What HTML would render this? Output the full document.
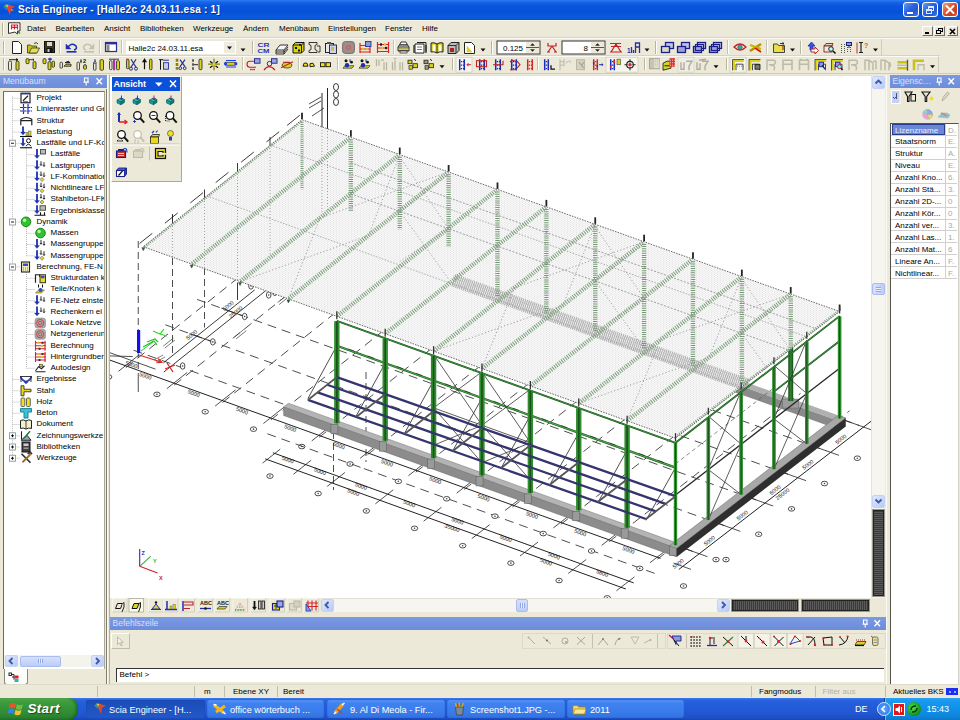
<!DOCTYPE html>
<html lang="de"><head><meta charset="utf-8"><title>Scia Engineer - [Halle2c 24.03.11.esa : 1]</title>
<style>

html,body{margin:0;padding:0;background:#ece9d8;}
body{width:960px;height:720px;overflow:hidden;font-family:"Liberation Sans",sans-serif;font-size:8px;color:#000;}
#screen{position:relative;width:960px;height:720px;overflow:hidden;background:#ece9d8;}
.abs{position:absolute;}
.t{position:absolute;white-space:nowrap;line-height:10px;height:10px;}
#titlebar{left:0;top:0;width:960px;height:20px;background:linear-gradient(#2f7df0 0px,#1867e8 2px,#0a58de 5px,#0650d6 12px,#0a5be2 17px,#0c56d0 19px,#0a4cc0 20px);}
#titletext{left:18px;top:3px;color:#fff;font-weight:bold;font-size:10px;line-height:14px;height:14px;letter-spacing:0.243px;text-shadow:1px 1px 0 #0a2f8a;}
.capbtn{position:absolute;top:2px;width:16px;height:15px;border:1px solid #fff;border-radius:3px;background:linear-gradient(135deg,#6a9cf5,#2a62dd 45%,#2458d2 70%,#3f78ec);box-sizing:border-box;}
#menubar{left:0;top:20px;width:960px;height:18px;background:#ece9d8;border-top:1px solid #f8f6ee;box-sizing:border-box;}
.menu{top:24px;font-size:8px;}
.tbrow{position:absolute;left:0;width:960px;}
.grip{position:absolute;width:1px;background:#b5b29f;border-right:1px solid #fff;}
.sep{position:absolute;width:1px;background:#c5c2b2;border-right:1px solid #fff;}
.hdr{position:absolute;height:13px;background:linear-gradient(#7b9ae4,#6d8cd9);color:#d7e0f7;font-size:8.5px;line-height:13px;white-space:nowrap;overflow:hidden;}
.sunken{position:absolute;border:1px solid #8c8a7c;border-right-color:#fff;border-bottom-color:#fff;box-sizing:border-box;background:#fff;}
</style></head>
<body>
<div id="screen">
<div id="titlebar" class="abs"></div>
<svg class="abs" style="left:2px;top:3px" width="14" height="14" viewBox="0 0 14 14"><path d="M1 3 L5 2 L6 6 Z" fill="#35b04a"/><path d="M3 1.5 L8 2 L7 6 Z" fill="#f4c430"/><path d="M6 2 L13 3.5 L9 6 L8 12 L5.5 7 Z" fill="#e5452b"/><path d="M9 6 L12 7 L9 8.2 Z" fill="#f08a2a"/><path d="M1 3 L4 7 L6 6 Z" fill="#3a78d8"/></svg>
<div id="titletext" class="t">Scia Engineer - [Halle2c 24.03.11.esa : 1]</div>
<div class="capbtn" style="left:903px"><div class="abs" style="left:3px;top:9px;width:6px;height:2px;background:#fff"></div></div>
<div class="capbtn" style="left:922px"><div class="abs" style="left:5px;top:3px;width:6px;height:5px;border:1px solid #dfe9ff;border-top-width:2px;box-sizing:border-box"></div><div class="abs" style="left:3px;top:6px;width:6px;height:5px;border:1px solid #dfe9ff;border-top-width:2px;box-sizing:border-box;background:#2c63dc"></div></div>
<div class="capbtn" style="left:942px;background:linear-gradient(135deg,#f0a080,#d9532c 45%,#c8401c 75%,#e0603a)"><svg class="abs" style="left:0;top:0" width="14" height="13" viewBox="0 0 14 13"><path d="M3.5 3 L10.5 10 M10.5 3 L3.5 10" stroke="#fff" stroke-width="2" stroke-linecap="round"/></svg></div>
<div id="menubar" class="abs"></div>
<div class="grip" style="left:2px;top:23px;height:13px"></div>
<svg class="abs" style="left:7px;top:22px" width="15" height="14" viewBox="0 0 15 14"><path d="M1.5 0.8 H13 V9 L10.5 9 L10.5 12 L8 10 L1.5 11.5 Z" fill="#fff" stroke="#333" stroke-width="1"/><path d="M4 3 H11 M4 5.3 H11 M4.5 2.5 V7.5 M7.5 2.5 V7.5 M10.5 2.5 V7.5" stroke="#d8232a" stroke-width="1.2" fill="none"/><path d="M11 9.5 l2 2" stroke="#2a8a3a" stroke-width="1.2"/></svg>
<div class="t menu" style="left:27px">Datei</div>
<div class="t menu" style="left:55.5px">Bearbeiten</div>
<div class="t menu" style="left:104px">Ansicht</div>
<div class="t menu" style="left:140px">Bibliotheken</div>
<div class="t menu" style="left:193px">Werkzeuge</div>
<div class="t menu" style="left:243px">Ändern</div>
<div class="t menu" style="left:279px">Menübaum</div>
<div class="t menu" style="left:328px">Einstellungen</div>
<div class="t menu" style="left:385px">Fenster</div>
<div class="t menu" style="left:422px">Hilfe</div>
<div class="abs" style="left:922px;top:26px;width:11px;height:10px;background:#ece9d8;border:1px solid #fff;border-right-color:#716f64;border-bottom-color:#716f64;box-sizing:border-box"></div>
<div class="abs" style="left:934px;top:26px;width:11px;height:10px;background:#ece9d8;border:1px solid #fff;border-right-color:#716f64;border-bottom-color:#716f64;box-sizing:border-box"></div>
<div class="abs" style="left:947px;top:26px;width:11px;height:10px;background:#ece9d8;border:1px solid #fff;border-right-color:#716f64;border-bottom-color:#716f64;box-sizing:border-box"></div>
<div class="abs" style="left:925px;top:32px;width:4px;height:2px;background:#000"></div>
<div class="abs" style="left:938px;top:28px;width:5px;height:4px;border:1px solid #000;border-top-width:1.5px;box-sizing:border-box"></div>
<div class="abs" style="left:936px;top:30px;width:5px;height:4px;border:1px solid #000;border-top-width:1.5px;box-sizing:border-box;background:#ece9d8"></div>
<svg class="abs" style="left:949px;top:28px" width="7" height="7" viewBox="0 0 7 7"><path d="M1 1 L6 6 M6 1 L1 6" stroke="#000" stroke-width="1.6"/></svg>
<div class="abs" style="left:0;top:37px;width:960px;height:1px;background:#d8d4c2"></div>
<div class="abs" style="left:0;top:38px;width:960px;height:1px;background:#fbfaf4"></div>
<div class="abs" style="left:0;top:55px;width:940px;height:1px;background:#d8d4c2"></div>
<div class="abs" style="left:0;top:56px;width:940px;height:1px;background:#fbfaf4"></div>
<div class="abs" style="left:0;top:73px;width:960px;height:1px;background:#cfccba"></div>
<svg class="abs" style="left:0;top:0" width="960" height="76" viewBox="0 0 960 76" shape-rendering="auto">
<rect x="3" y="41" width="1" height="13" fill="#b8b5a2"/><rect x="4" y="41" width="1" height="13" fill="#fff"/>
<path d="M12.5 41.5 h6 l3 3 v9 h-9 z" stroke="#222" stroke-width="1" fill="#fff"/>
<path d="M27.5 45 h3 l1 1 h5 v7 h-9 z" stroke="#333" stroke-width="0.8" fill="#c9c21a"/><path d="M29 53 l2.5 -5 h8 l-2.5 5 z" stroke="#333" stroke-width="0.8" fill="#e6e04a"/><path d="M34 43.5 q2.5 -2 4 0.5" stroke="#222" stroke-width="0.9" fill="none"/>
<rect x="44.5" y="41.5" width="10" height="11" fill="#3a3a1a" stroke="#111" stroke-width="1"/><rect x="47" y="42" width="5" height="4" fill="#d8d8d8"/><rect x="46.5" y="48" width="6" height="4.5" fill="#111"/><rect x="47.5" y="49" width="2" height="3" fill="#ccc"/>
<rect x="59" y="40" width="1" height="14" fill="#c5c2b2"/><rect x="60" y="40" width="1" height="14" fill="#fff"/>
<path d="M68 47 q4 -5 8 -1 q1.5 3 -2 4" stroke="#1c2fb4" stroke-width="1.6" fill="none"/><path d="M66 44 v5 h5 z" stroke="#1c2fb4" stroke-width="0.5" fill="#1c2fb4"/><rect x="66.5" y="51" width="10" height="1.6" fill="#1c2fb4"/>
<path d="M92 47 q-4 -5 -8 -1 q-1.5 3 2 4" stroke="#c4c1b0" stroke-width="1.6" fill="none"/><path d="M94 44 v5 h-5 z" stroke="#c4c1b0" stroke-width="0.5" fill="#c4c1b0"/><rect x="84" y="51" width="10" height="1.6" fill="#c4c1b0"/>
<rect x="99" y="40" width="1" height="14" fill="#c5c2b2"/><rect x="100" y="40" width="1" height="14" fill="#fff"/>
<rect x="105.5" y="42.5" width="11" height="9" fill="#fff" stroke="#2a2f9a" stroke-width="1.2"/><rect x="105" y="42" width="12" height="2.4" fill="#2a2f9a"/><rect x="106.5" y="45" width="3" height="6" fill="#8a8a8a"/>
<rect x="121" y="40" width="1" height="14" fill="#c5c2b2"/><rect x="122" y="40" width="1" height="14" fill="#fff"/>
<rect x="126" y="41" width="110" height="13" fill="#fff"/>
<text x="128.5" y="50.6" font-family="Liberation Sans, sans-serif" font-size="8" fill="#000">Halle2c 24.03.11.esa</text>
<rect x="224" y="42" width="11" height="11" fill="#eeece0"/>
<path d="M227 46.5 h5 l-2.5 3 z" fill="#111"/>
<path d="M240.5 48.5 h5 l-2.5 3 z" fill="#111"/>
<rect x="252" y="41" width="1" height="13" fill="#b8b5a2"/><rect x="253" y="41" width="1" height="13" fill="#fff"/>
<text x="257.5" y="47" font-family="Liberation Sans, sans-serif" font-size="6" font-weight="bold" fill="#1c2fb4" textLength="12" lengthAdjust="spacingAndGlyphs">CR</text>
<text x="257.5" y="53" font-family="Liberation Sans, sans-serif" font-size="6" font-weight="bold" fill="#1c2fb4" textLength="12" lengthAdjust="spacingAndGlyphs">CM</text>
<path d="M276 50 l4 -5 h8 l-4 5 z" stroke="#222" stroke-width="0.9" fill="#f4f4f4"/><path d="M276 52 h8 l4 -5 M276 54 h8 l4 -5 M276 50 v4 M284 50 v4" stroke="#222" stroke-width="0.9" fill="none"/>
<path d="M293 45 l2.5 -2.5 h8.5 v8 l-2.5 2.5 h-8.5 z" stroke="#111" stroke-width="1" fill="#d9d21c"/><path d="M293 45 h8.5 v8 M301.5 45 l2.5 -2.5" stroke="#111" stroke-width="0.9" fill="none"/><rect x="295" y="47" width="2" height="2" fill="#111"/><rect x="298" y="49.5" width="2" height="2" fill="#111"/><rect x="299" y="44" width="2" height="1.5" fill="#111"/>
<path d="M309 42.5 h8 v2 l-2 1 v4 l2 1 v2 h-8 v-2 l2 -1 v-4 l-2 -1 z" stroke="#222" stroke-width="0.9" fill="#ece9d8"/><path d="M317 46 h3 v6 h-2" stroke="#222" stroke-width="0.9" fill="none"/>
<rect x="325.5" y="43.5" width="8" height="9" fill="#e8e8e8" stroke="#223" stroke-width="1"/><rect x="329.5" y="45" width="7" height="8.5" fill="#c9d4f0" stroke="#223" stroke-width="0.9"/><rect x="331" y="47" width="3" height="3.5" fill="#e8b030"/><rect x="327" y="42" width="4" height="2" fill="#555"/>
<rect x="342.5" y="41.5" width="12" height="12" fill="#8f8f8f" stroke="#666" stroke-width="0.8" rx="3"/><circle cx="348.5" cy="47.5" r="4" fill="none" stroke="#d77" stroke-width="1"/><circle cx="348.5" cy="47.5" r="2" fill="none" stroke="#c55" stroke-width="1"/>
<path d="M360 43 v10 M370 46 v7 M360 45.5 h10 M360 49 h10 M360 52 h10" stroke="#d8232a" stroke-width="1.2" fill="none"/><rect x="365.5" y="41.5" width="5.5" height="5" fill="#8a9ae0" stroke="#2a2f9a" stroke-width="0.9"/><rect x="362" y="47.8" width="2" height="2.2" fill="#e0c020"/><rect x="366" y="47.8" width="2" height="2.2" fill="#e0c020"/>
<path d="M377.5 42 v11 M388.5 42 v11 M377 44.5 h12 M377 48 h12 M377 51.5 h12" stroke="#d8232a" stroke-width="1.2" fill="none"/><rect x="380" y="43.3" width="2" height="2.4" fill="#222"/><rect x="384" y="43.3" width="2" height="2.4" fill="#e0c020"/><rect x="381" y="46.8" width="2" height="2.4" fill="#e0c020"/><rect x="385" y="46.8" width="2" height="2.4" fill="#222"/>
<rect x="393" y="40" width="1" height="14" fill="#c5c2b2"/><rect x="394" y="40" width="1" height="14" fill="#fff"/>
<path d="M398 47 l2 -3 h7 l2 3 v4 h-11 z" stroke="#222" stroke-width="0.9" fill="#888"/><path d="M400 44 l1 -2 h5 l1 2" stroke="#222" stroke-width="0.9" fill="#fff"/><rect x="398.5" y="48.5" width="10" height="1.5" fill="#d9d21c"/><rect x="400" y="51" width="7" height="2" fill="#eee" stroke="#222" stroke-width="0.7"/>
<path d="M415 44 h9 v9 h-9 z" stroke="#222" stroke-width="1" fill="#fff"/><path d="M417 42.5 h9 v9" stroke="#222" stroke-width="1" fill="none"/><path d="M417 47 h5 M417 49.5 h5" stroke="#555" stroke-width="0.8" fill="none"/><path d="M414 45 v8 M426 45 v8" stroke="#222" stroke-width="1.2" fill="none"/>
<path d="M431 43 q3 -1 6 1 q3 -2 6 -1 v9 q-3 -1 -6 1 q-3 -2 -6 -1 z" stroke="#222" stroke-width="1" fill="#d9d21c"/><path d="M437 44 v9" stroke="#222" stroke-width="0.9" fill="none"/><path d="M433 45 h2 v6 h-2 z M439 45 h2 v6 h-2 z" stroke="#fff" stroke-width="0.5" fill="#fffbe0"/>
<path d="M448 45.5 l3 -3 h8 v8 l-3 3 h-8 z" stroke="#222" stroke-width="1" fill="#bbb"/><path d="M448 45.5 h8 v8 M456 45.5 l3 -3" stroke="#222" stroke-width="0.9" fill="none"/><rect x="450" y="48" width="4" height="4" fill="#a22"/>
<path d="M464.5 42.5 h7 l3 3 v8 h-10 z" stroke="#222" stroke-width="1" fill="#fff"/><path d="M467 46 l5 6 h-5 z" stroke="#d9d21c" stroke-width="0.5" fill="#d9d21c"/>
<path d="M480.5 48.5 h5 l-2.5 3 z" fill="#111"/>
<rect x="491" y="41" width="1" height="13" fill="#b8b5a2"/><rect x="492" y="41" width="1" height="13" fill="#fff"/>
<rect x="497" y="41" width="43" height="13" fill="#fff" stroke="#333" stroke-width="1"/>
<text x="503" y="51" font-family="Liberation Sans, sans-serif" font-size="8" fill="#000">0.125</text>
<rect x="526" y="42" width="13" height="11" fill="#ece9d8"/><path d="M526 47.5 h13" stroke="#555" stroke-width="1" fill="none"/><path d="M530.5 45.5 l2 -2 l2 2 z M530.5 49.5 l2 2 l2 -2 z" stroke="#111" stroke-width="0.3" fill="#111"/>
<path d="M548 43 v3 h8 v-3 M552 46 l-4 6 M552 46 l4 6 M547 52 h3 M554 52 h3" stroke="#c0202a" stroke-width="1.2" fill="none"/>
<rect x="562" y="41" width="43" height="13" fill="#fff" stroke="#333" stroke-width="1"/>
<text x="583.5" y="51" font-family="Liberation Sans, sans-serif" font-size="8" fill="#000">8</text>
<rect x="591" y="42" width="13" height="11" fill="#ece9d8"/><path d="M591 47.5 h13" stroke="#555" stroke-width="1" fill="none"/><path d="M595.5 45.5 l2 -2 l2 2 z M595.5 49.5 l2 2 l2 -2 z" stroke="#111" stroke-width="0.3" fill="#111"/>
<path d="M610 43.5 h11 M611 46.5 h10 M616 44 l-5 8 M616 44 l5 8 M610 52 h12" stroke="#c0202a" stroke-width="1.2" fill="none"/>
<text x="627" y="53" font-family="Liberation Sans, sans-serif" font-size="6.5" font-weight="bold" fill="#1c2fb4">1</text>
<path d="M631.5 53 v-6 M635.5 53 v-10 h4 v4 h-4 M639.5 47 v6 M633.5 53 v-3" stroke="#2a2f9a" stroke-width="1.3" fill="none"/>
<path d="M644.5 48.5 h5 l-2.5 3 z" fill="#111"/>
<rect x="655" y="41" width="1" height="13" fill="#b8b5a2"/><rect x="656" y="41" width="1" height="13" fill="#fff"/>
<rect x="665.5" y="42.5" width="8" height="6" fill="#bfc4e6" stroke="#1a1f8a" stroke-width="1.3"/><rect x="661.5" y="46.5" width="8" height="6" fill="#d8d8c8" stroke="#1a1f8a" stroke-width="1.3"/>
<rect x="681.5" y="42.5" width="8" height="6" fill="#bfc4e6" stroke="#1a1f8a" stroke-width="1.3"/><rect x="677.5" y="46.5" width="8" height="6" fill="#9aa0d8" stroke="#1a1f8a" stroke-width="1.3"/>
<rect x="697.5" y="42.5" width="8" height="6" fill="#bfc4e6" stroke="#1a1f8a" stroke-width="1.3"/><rect x="693.5" y="46.5" width="8" height="6" fill="#9aa0d8" stroke="#1a1f8a" stroke-width="1.3"/><rect x="695.5" y="44.5" width="8" height="6" fill="none" stroke="#1a1f8a" stroke-width="1.1"/>
<rect x="713.5" y="42.5" width="8" height="6" fill="#bfc4e6" stroke="#1a1f8a" stroke-width="1.3"/><rect x="709.5" y="46.5" width="8" height="6" fill="#9aa0d8" stroke="#1a1f8a" stroke-width="1.3"/><rect x="711.5" y="44.5" width="8" height="6" fill="none" stroke="#1a1f8a" stroke-width="1.1"/>
<rect x="727" y="40" width="1" height="14" fill="#c5c2b2"/><rect x="728" y="40" width="1" height="14" fill="#fff"/>
<path d="M734 47 q6 -6 12 0 q-6 6 -12 0 z" stroke="#c0202a" stroke-width="1.3" fill="#ece9d8"/><circle cx="740" cy="47.3" r="2.3" fill="#3aa0a0" stroke="#555" stroke-width="0.6"/>
<path d="M750 51 l11 -7" stroke="#b89000" stroke-width="2.6" fill="none"/><path d="M750 45 l11 4" stroke="#c8b400" stroke-width="2.2" fill="none"/><path d="M755 48 l6 4" stroke="#e01010" stroke-width="1.6" fill="none"/>
<rect x="766" y="40" width="1" height="14" fill="#c5c2b2"/><rect x="767" y="40" width="1" height="14" fill="#fff"/>
<path d="M773.5 44 h4 l1 1.5 h6 v7 h-11 z" stroke="#333" stroke-width="0.9" fill="#e8e04a"/><path d="M780 43.5 h4 M784 43.5 l-1.5 -1.2 M784 43.5 l-1.5 1.2" stroke="#222" stroke-width="0.9" fill="none"/><path d="M783 46 v4" stroke="#c0202a" stroke-width="1.2" fill="none"/>
<path d="M790 48.5 h5 l-2.5 3 z" fill="#111"/>
<rect x="800" y="41" width="1" height="13" fill="#b8b5a2"/><rect x="801" y="41" width="1" height="13" fill="#fff"/>
<path d="M808 46 l3.5 -4 l3.5 4 h-2 v4 h-3 v-4 z" stroke="#1c2fb4" stroke-width="0.8" fill="#3a50e0"/><path d="M811 49 h4 v-2 l3.5 3.5 l-3.5 3.5 v-2 h-4 z" stroke="#c0202a" stroke-width="1" fill="#fff"/>
<path d="M824 46 l2 -2.5 h7 l-1 2.5 z" stroke="#7a2a1a" stroke-width="0.9" fill="#e8d0c0"/><rect x="824" y="46" width="8" height="6" fill="#f4e8e0" stroke="#7a2a1a" stroke-width="0.9"/><circle cx="831" cy="49" r="2.3" fill="#bfe" stroke="#223" stroke-width="1"/><path d="M833 51 l2.5 2.5" stroke="#111" stroke-width="1.6" fill="none"/>
<path d="M841.5 44 v9 M844.5 44 v9 M847.5 47 v6 M850.5 47 v6" stroke="#555" stroke-width="1" fill="none" stroke-dasharray="1 1"/><rect x="846.5" y="42.5" width="5" height="3" fill="#8a9ae0" stroke="#1a1f8a" stroke-width="1"/><path d="M849 46 v2" stroke="#1a1f8a" stroke-width="1" fill="none"/>
<path d="M857 42.5 v11" stroke="#c05050" stroke-width="1.2" fill="none"/><path d="M859 42.5 h4 M861 42.5 v10 M859 52.5 h4" stroke="#222" stroke-width="1.2" fill="none"/>
<text x="864" y="48" font-family="Liberation Sans, sans-serif" font-size="7" font-weight="bold" fill="#c86a10">?</text>
<path d="M873 48.5 h5 l-2.5 3 z" fill="#111"/>
<rect x="881" y="39" width="1" height="16" fill="#d0cdbc"/>
<g transform="translate(0 -0.8)">
<rect x="3" y="59" width="1" height="12" fill="#b8b5a2"/><rect x="4" y="59" width="1" height="12" fill="#fff"/>
<rect x="8.5" y="62" width="3" height="9" fill="#ece9d8" stroke="#222" stroke-width="0.8" rx="1"/><rect x="16" y="62" width="3" height="9" fill="#d9d21c" stroke="#222" stroke-width="0.8" rx="1"/><path d="M9 60.5 h9 M18 60.5 l-1.5 -1 v2 z" stroke="#111" stroke-width="0.9" fill="none"/>
<rect x="26" y="59.5" width="3" height="5" fill="#d9d21c" stroke="#222" stroke-width="0.8" rx="1"/><rect x="33" y="62.5" width="3" height="7" fill="#d9d21c" stroke="#222" stroke-width="0.8" rx="1"/><path d="M29 60.5 h5 l-1.2 -1 M34 60.5 l-1.2 1" stroke="#111" stroke-width="0.8" fill="none"/>
<rect x="43" y="59.5" width="3" height="5" fill="#d9d21c" stroke="#222" stroke-width="0.8" rx="1"/><rect x="48" y="62.5" width="3" height="8" fill="#d9d21c" stroke="#222" stroke-width="0.8" rx="1"/><rect x="52" y="62" width="2.5" height="6" fill="#d9d21c" stroke="#222" stroke-width="0.8" rx="1"/><path d="M48 60 h4 M50 58.5 v3.5" stroke="#1c2fb4" stroke-width="1.2" fill="none"/>
<rect x="60" y="63" width="2.5" height="6" fill="#ece9d8" stroke="#222" stroke-width="0.8" rx="1"/><path d="M64 67 h7 v-2 h-5 z" stroke="#111" stroke-width="0.8" fill="#d9d21c"/><path d="M65 63.5 h5 l-1.5 -1.5 z" stroke="#111" stroke-width="0.8" fill="#111"/>
<rect x="77" y="63" width="2.5" height="8" fill="#ece9d8" stroke="#222" stroke-width="0.8" rx="1"/><rect x="83.5" y="66" width="3" height="4" fill="#d9d21c" stroke="#222" stroke-width="0.8" rx="1"/><path d="M81 60 v4 M80 62 h2" stroke="#111" stroke-width="0.8" fill="none"/><text x="83" y="64" font-family="Liberation Sans, sans-serif" font-size="5.5" font-weight="bold" fill="#111">2</text><circle cx="85" cy="66" r="0.9" fill="#fff" stroke="#111" stroke-width="0.6"/>
<rect x="93.5" y="63" width="2.5" height="8" fill="#ece9d8" stroke="#222" stroke-width="0.8" rx="1"/><rect x="100" y="60.5" width="3.5" height="10.5" fill="#d9d21c" stroke="#222" stroke-width="0.8" rx="1"/><path d="M95 60 v3" stroke="#1c2fb4" stroke-width="1.2" fill="none"/><circle cx="95" cy="63.5" r="1" fill="#fff" stroke="#111" stroke-width="0.6"/>
<rect x="109.5" y="61.5" width="2.5" height="9" fill="#ece9d8" stroke="#222" stroke-width="0.8" rx="1"/><rect x="116.5" y="61.5" width="3" height="9" fill="#d9d21c" stroke="#222" stroke-width="0.8" rx="1"/><rect x="113" y="60.5" width="2.2" height="10.5" fill="#b030b0"/><path d="M109 60 h10" stroke="#111" stroke-width="0.8" fill="none"/>
<rect x="126.5" y="60.5" width="2.5" height="9" fill="#d9d21c" stroke="#222" stroke-width="0.8" rx="1"/><path d="M131 60 l5 8 M136 60 l-5 8" stroke="#2a2f8a" stroke-width="1.2" fill="none"/><circle cx="131" cy="69.5" r="1.5" fill="none" stroke="#2a2f8a" stroke-width="1"/><circle cx="136" cy="69.5" r="1.5" fill="none" stroke="#2a2f8a" stroke-width="1"/><path d="M126 60 h3" stroke="#c0202a" stroke-width="1" fill="none"/>
<path d="M144.5 63 v7 M144.5 60 l-1.5 2.5 h3 z" stroke="#111" stroke-width="1.2" fill="#111"/><rect x="149.5" y="60" width="2.5" height="10.5" fill="#d9d21c" stroke="#222" stroke-width="0.8" rx="1"/>
<path d="M160.5 60.5 v10 M159 60.5 h4" stroke="#111" stroke-width="1" fill="none"/><rect x="163.5" y="63.5" width="5" height="6.5" fill="#c8cce8" stroke="#2a2f8a" stroke-width="0.9"/><path d="M163 61 h6" stroke="#2a2f8a" stroke-width="1" fill="none"/>
<path d="M177 59.5 v11" stroke="#8a8400" stroke-width="2.6" fill="none" stroke-dasharray="3 1.2"/><path d="M180 60.5 l5 7 M185 60.5 l-5 7" stroke="#2a2f8a" stroke-width="1.2" fill="none"/><circle cx="180.3" cy="69" r="1.4" fill="none" stroke="#2a2f8a" stroke-width="1"/><circle cx="184.7" cy="69" r="1.4" fill="none" stroke="#2a2f8a" stroke-width="1"/>
<path d="M193 60 v11" stroke="#111" stroke-width="1.3" fill="none" stroke-dasharray="2.5 1.5"/><rect x="199" y="60" width="3" height="10.5" fill="#d9d21c" stroke="#222" stroke-width="0.8" rx="1"/><path d="M194 65.5 h4" stroke="#111" stroke-width="0.9" fill="none"/>
<path d="M208 65 h12 M214 59.5 v11.5" stroke="#8a8400" stroke-width="1.3" fill="none"/><path d="M210 62 l2.5 2 M218 62 l-2.5 2 M210 68.5 l2.5 -2 M218 68.5 l-2.5 -2" stroke="#111" stroke-width="1.3" fill="none"/><circle cx="214" cy="65" r="1.4" fill="#d9d21c"/>
<rect x="225.5" y="63" width="10" height="3" fill="#d9d21c" stroke="#111" stroke-width="0.6"/><circle cx="225.5" cy="64.5" r="1.6" fill="#1c3ff0"/><circle cx="235.8" cy="64.5" r="1.6" fill="#1c3ff0"/><path d="M226 61.3 h10 M226 67.8 h10" stroke="#1c3ff0" stroke-width="1.1" fill="none"/>
<rect x="242" y="58" width="1" height="13" fill="#c5c2b2"/><rect x="243" y="58" width="1" height="13" fill="#fff"/>
<rect x="254.5" y="59.5" width="5.5" height="4.5" fill="#9aa6e8" stroke="#2a2f8a" stroke-width="1"/><path d="M254 62 h-4 q-3 0 -3 3 q0 3 3 3 h6" stroke="#c0202a" stroke-width="1.1" fill="none"/><path d="M250 70.5 h5 M250 70.5 l1.2 -1 M255 70.5 l-1.2 -1" stroke="#c0202a" stroke-width="0.9" fill="none"/>
<rect x="271.5" y="59.5" width="5.5" height="4.5" fill="#9aa6e8" stroke="#2a2f8a" stroke-width="1"/><circle cx="269.5" cy="64.5" r="2.3" fill="none" stroke="#2a2f8a" stroke-width="1"/><path d="M264 71 q5 -7 11 0" stroke="#c0202a" stroke-width="1.2" fill="none"/>
<ellipse cx="287" cy="66" rx="4.8" ry="2.8" fill="#d9d21c" stroke="#333" stroke-width="0.8"/><path d="M281 68.5 l12 -6 M283 63 h7" stroke="#c0202a" stroke-width="1.1" fill="none"/>
<rect x="298" y="58" width="1" height="13" fill="#c5c2b2"/><rect x="299" y="58" width="1" height="13" fill="#fff"/>
<path d="M303 67 l1 -3 h3 l1 3 z" stroke="#111" stroke-width="0.9" fill="#f0e020"/><path d="M310 67.5 l0 -3 l3 -0.5 l1.5 3 z" stroke="#111" stroke-width="0.9" fill="#f0e020"/>
<rect x="320.5" y="63.5" width="4.5" height="4" fill="#f0e020" stroke="#111" stroke-width="0.9"/><rect x="326" y="63.5" width="4.5" height="4" fill="#f0e020" stroke="#111" stroke-width="0.9"/>
<rect x="337" y="58" width="1" height="13" fill="#c5c2b2"/><rect x="338" y="58" width="1" height="13" fill="#fff"/>
<path d="M343 69 l2 -2.5 h9 l-2 2.5 z" stroke="#333" stroke-width="0.7" fill="#d9d21c"/><circle cx="347" cy="66" r="2.2" fill="#1c2fb4"/><circle cx="346" cy="61.5" r="1.5" fill="#111"/><circle cx="351.5" cy="63" r="1.4" fill="#111"/><path d="M350 60 v3" stroke="#1c2fb4" stroke-width="1" fill="none"/>
<path d="M359 69 l2 -2.5 h9 l-2 2.5 z" stroke="#333" stroke-width="0.7" fill="#d9d21c"/><circle cx="363" cy="66" r="2.2" fill="#1c2fb4"/><circle cx="362" cy="61.5" r="1.5" fill="#111"/><circle cx="367.5" cy="63" r="1.4" fill="#111"/><path d="M366 60 v3" stroke="#1c2fb4" stroke-width="1" fill="none"/>
<path d="M376.5 60 v7 M379 60.5 v6 M384 63 v8 M386.5 63 v8 M381 61 h3" stroke="#b8b5a2" stroke-width="1.3" fill="none"/>
<path d="M392.5 63 v8 M395 61 v10 M400 63 v8 M402.500 63 v8 M394 60 l2 -1" stroke="#b8b5a2" stroke-width="1.3" fill="none"/>
<rect x="408" y="61" width="4" height="3.5" fill="#d9d21c" stroke="#222" stroke-width="0.8"/><rect x="413" y="64.5" width="4.5" height="4" fill="#d9d21c" stroke="#222" stroke-width="0.8"/><rect x="409" y="66.5" width="3.5" height="3.5" fill="#d9d21c" stroke="#222" stroke-width="0.7"/><path d="M414 60 l2 1.5" stroke="#111" stroke-width="0.9" fill="none"/>
<rect x="424" y="61" width="4" height="3.5" fill="#9a9888" stroke="#222" stroke-width="0.8"/><rect x="429" y="64.5" width="4.5" height="4" fill="#d9d21c" stroke="#222" stroke-width="0.8"/><rect x="425" y="66.5" width="3.5" height="3.5" fill="#9a9888" stroke="#222" stroke-width="0.7"/><path d="M430 60 l2 1.5" stroke="#111" stroke-width="0.9" fill="none"/>
<path d="M439.5 66 h5 l-2.5 3 z" fill="#111"/>
<rect x="452" y="59" width="1" height="12" fill="#b8b5a2"/><rect x="453" y="59" width="1" height="12" fill="#fff"/>
<rect x="456" y="58" width="16" height="15" fill="#f6f5ee" stroke="#d0cdbc" stroke-width="0.8"/>
<path d="M459.7 60 v11 M464.3 60 v11" stroke="#1c2fb4" stroke-width="1.5" fill="none"/><path d="M459 62.5 h5 M459 66 h5 M459 69.500 h5" stroke="#1c2fb4" stroke-width="1.2" fill="none" stroke-dasharray="1.2 0.8"/><path d="M471 65.5 h-4 l1.5 -1.5 M467 65.5 l1.5 1.5" stroke="#c0202a" stroke-width="1" fill="none"/>
<path d="M479.7 60 v11 M484.3 60 v11" stroke="#1c2fb4" stroke-width="1.5" fill="none"/><path d="M479 62.5 h5 M479 66 h5 M479 69.500 h5" stroke="#1c2fb4" stroke-width="1.2" fill="none" stroke-dasharray="1.2 0.8"/><rect x="476.5" y="61.5" width="10" height="6" fill="none" stroke="#c0202a" stroke-width="1.1"/>
<path d="M495.7 60 v11 M500.3 60 v11" stroke="#1c2fb4" stroke-width="1.5" fill="none"/><path d="M495 62.5 h5 M495 66 h5 M495 69.500 h5" stroke="#1c2fb4" stroke-width="1.2" fill="none" stroke-dasharray="1.2 0.8"/><path d="M493 65.5 h10 v-4" stroke="#c0202a" stroke-width="1.1" fill="none"/>
<path d="M511.7 60 v11 M516.3 60 v11" stroke="#1c2fb4" stroke-width="1.5" fill="none"/><path d="M511 62.5 h5 M511 66 h5 M511 69.500 h5" stroke="#1c2fb4" stroke-width="1.2" fill="none" stroke-dasharray="1.2 0.8"/><path d="M510 63 q3 -4 6 0 M517 62 l3 3.5 l-3 3.5 M510 70.5 h7" stroke="#c0202a" stroke-width="1.1" fill="none"/>
<path d="M527.7 60 v11 M532.3 60 v11" stroke="#d8232a" stroke-width="1.5" fill="none"/><path d="M527 62.5 h5 M527 66 h5 M527 69.500 h5" stroke="#d8232a" stroke-width="1.2" fill="none" stroke-dasharray="1.2 0.8"/>
<rect x="537" y="58" width="1" height="13" fill="#c5c2b2"/><rect x="538" y="58" width="1" height="13" fill="#fff"/>
<path d="M544.7 60 v11 M548.3 60 v11" stroke="#1c2fb4" stroke-width="1.5" fill="none"/><path d="M544 62.5 h4 M544 66 h4 M544 69.500 h4" stroke="#1c2fb4" stroke-width="1.2" fill="none" stroke-dasharray="1.2 0.8"/><path d="M551 66 v4 h4" stroke="#111" stroke-width="1.3" fill="none"/>
<path d="M560 60 v11 M564 60 v7 M560 62.5 h4 M560 66 h4" stroke="#c4c1b0" stroke-width="1.3" fill="none"/><path d="M566 64 q4 -5 5 0" stroke="#c4c1b0" stroke-width="1.1" fill="none"/>
<rect x="576.5" y="60.5" width="8" height="10" fill="#d4d1c0" stroke="#b8b5a2" stroke-width="0.9"/><path d="M579 63 l5 6 M584 63 l-3 4" stroke="#a8a594" stroke-width="1.1" fill="none"/>
<path d="M593.7 60 v11 M597.3 60 v11" stroke="#d8232a" stroke-width="1.5" fill="none"/><path d="M593 62.5 h4 M593 66 h4 M593 69.500 h4" stroke="#d8232a" stroke-width="1.2" fill="none" stroke-dasharray="1.2 0.8"/><path d="M593.7 63 v2 M597.3 66 v2" stroke="#1c2fb4" stroke-width="1.5" fill="none"/><path d="M599 65.5 h4 l-1.2 -1.200 M603 65.5 l-1.2 1.2" stroke="#1c2fb4" stroke-width="1" fill="none"/>
<rect x="606" y="58" width="32" height="15" fill="#f6f5ee" stroke="#d0cdbc" stroke-width="0.8"/>
<path d="M610.7 60 v11 M614.3 60 v11" stroke="#1c2fb4" stroke-width="1.5" fill="none"/><path d="M610 62.5 h4 M610 66 h4 M610 69.500 h4" stroke="#1c2fb4" stroke-width="1.2" fill="none" stroke-dasharray="1.2 0.8"/><path d="M614.3 61 v3 M610.7 66 v3" stroke="#d8232a" stroke-width="1.5" fill="none"/><rect x="617" y="60" width="3.5" height="5.5" fill="#d9d21c" stroke="#555" stroke-width="0.7"/>
<circle cx="630" cy="65.5" r="3.3" fill="none" stroke="#222" stroke-width="1.1"/><circle cx="630" cy="65.5" r="1.7" fill="#d8232a"/><path d="M630 60 v3 M630 68 v3 M624.5 65.5 h3 M632.5 65.5 h3" stroke="#222" stroke-width="1.1" fill="none"/>
<rect x="644" y="59" width="1" height="12" fill="#b8b5a2"/><rect x="645" y="59" width="1" height="12" fill="#fff"/>
<rect x="649.5" y="59.5" width="10" height="10" fill="#c8c5b4" stroke="#a8a594" stroke-width="1"/><rect x="654" y="60" width="5.5" height="9" fill="#dedbca"/><path d="M655 62 h4 M655 65 h4" stroke="#b8b5a2" stroke-width="0.8" fill="none" stroke-dasharray="1 1"/>
<path d="M663 64 l4 -2 h4 v7 l-8 2 z" stroke="#222" stroke-width="0.9" fill="#d9d21c"/><path d="M664.5 66.5 h6" stroke="#0a6a2a" stroke-width="1.3" fill="none"/><rect x="669.5" y="59" width="5.5" height="8.5" fill="#e03030"/><path d="M670 61 h5 M670 63.5 h5 M670 66 h5" stroke="#fff" stroke-width="0.7" fill="none" stroke-dasharray="1 1"/>
<rect x="678" y="58" width="16" height="15" fill="#f0eee4" stroke="#d8d5c4" stroke-width="0.8"/>
<path d="M681 63 v7 h3 v-7 M686 62 h6 l-3 5 v4" stroke="#b0ad9c" stroke-width="1.4" fill="none"/>
<path d="M697 63 v7 h3 v-6 M702 62 h6 l-3 5 v4 M699 61 l7 -1" stroke="#b0ad9c" stroke-width="1.4" fill="none"/>
<path d="M713.5 66 h5 l-2.5 3 z" fill="#111"/>
<rect x="726" y="59" width="1" height="12" fill="#b8b5a2"/><rect x="727" y="59" width="1" height="12" fill="#fff"/>
<rect x="730" y="58" width="16" height="15" fill="#f6f5ee" stroke="#d0cdbc" stroke-width="0.8"/>
<path d="M733.7 71 v-9.5 h10" stroke="#d9d21c" stroke-width="2.6" fill="none"/><path d="M732.5 71.300 v-11 h11.5" stroke="#222" stroke-width="0.7" fill="none"/><path d="M736.0 71 v-6 h7 v6" stroke="#222" stroke-width="0.8" fill="none"/><path d="M737 67 h7" stroke="#777" stroke-width="0.8" fill="none" stroke-dasharray="1 1"/>
<path d="M750.2 71 v-9.5 h10" stroke="#d9d21c" stroke-width="2.6" fill="none"/><path d="M749 71.300 v-11 h11.5" stroke="#222" stroke-width="0.7" fill="none"/><path d="M752.5 71 v-6 h7 v6" stroke="#222" stroke-width="0.8" fill="none"/><rect x="755" y="65.5" width="5" height="4.5" fill="#777" stroke="#111" stroke-width="0.8"/>
<path d="M767 71 v-10 h7 q3 2 0 4.500 h-5 M771 66 q5 0 3 5" stroke="#bdbaa8" stroke-width="1.5" fill="none"/>
<path d="M783 71 v-10 h9 v10 M783 65 h9" stroke="#bdbaa8" stroke-width="1.6" fill="none"/>
<path d="M799.500 71 v-10 h9 v10 M799.500 65 h9 M801 61 v-1.500 M807 61 v-1.500" stroke="#bdbaa8" stroke-width="1.6" fill="none"/>
<path d="M816.2 71 v-9.5 h10" stroke="#d9d21c" stroke-width="2.6" fill="none"/><path d="M815 71.300 v-11 h11.5" stroke="#222" stroke-width="0.7" fill="none"/><path d="M818.5 71 v-6 h7 v6" stroke="#222" stroke-width="0.8" fill="none"/><rect x="819" y="63" width="4.5" height="4.5" fill="#8a9ae0" stroke="#1a1f8a" stroke-width="0.9"/><path d="M822 66 l3 4" stroke="#1a1f8a" stroke-width="1.3" fill="none"/>
<path d="M832.7 71 v-9.5 h10" stroke="#d9d21c" stroke-width="2.6" fill="none"/><path d="M831.5 71.300 v-11 h11.5" stroke="#222" stroke-width="0.7" fill="none"/><path d="M835.0 71 v-6 h7 v6" stroke="#222" stroke-width="0.8" fill="none"/><rect x="835.5" y="63" width="4.5" height="4.5" fill="#8a9ae0" stroke="#1a1f8a" stroke-width="0.9"/><circle cx="839.5" cy="67.5" r="2" fill="#7ee" stroke="#c0202a" stroke-width="0.9"/><path d="M841 69 l1.500 1.800" stroke="#111" stroke-width="1.3" fill="none"/>
<path d="M849 71 v-10 h7 q3 2 0 4.500 h-5 M853 66 q5 0 3 5" stroke="#bdbaa8" stroke-width="1.5" fill="none"/>
<path d="M865 71 v-10 h4 l4 3 v7 M869 61 v10 M873 62 h3 v8" stroke="#bdbaa8" stroke-width="1.5" fill="none"/>
<path d="M881 71 v-10 h4 l4 3 v7 M885 61 v10 M889 63 q3 2 0 6" stroke="#bdbaa8" stroke-width="1.5" fill="none"/>
<path d="M897.5 63 h10 M897.5 69 h10" stroke="#c8c21a" stroke-width="2.4" fill="none"/><path d="M907.5 60.5 v11" stroke="#555" stroke-width="1.3" fill="none"/><path d="M897 66 h10" stroke="#a8a594" stroke-width="1" fill="none"/>
<path d="M914 71 v-9.5 h10" stroke="#c8c21a" stroke-width="2.6" fill="none"/><path d="M918 71 v-5.500 h6 v5.500" stroke="#bdbaa8" stroke-width="1.4" fill="none"/>
<path d="M930 66 h5 l-2.5 3 z" fill="#111"/>
<rect x="938" y="57" width="1" height="16" fill="#d0cdbc"/>
</g>
</svg>
<div class="hdr" style="left:0;top:75px;width:107px;"><span style="position:absolute;left:3px;top:0">Menübaum</span></div>
<svg class="abs" style="left:80px;top:75px" width="27" height="13" viewBox="0 0 27 13"><path d="M4.500 3 h3.500 v4 h-3.500 z M3.500 7.300 h5.500 M6.200 7.500 v3" stroke="#fff" stroke-width="1.1" fill="none"/><path d="M16.500 3.300 l5.500 6 M22 3.300 l-5.500 6" stroke="#fff" stroke-width="1.400" fill="none"/></svg>
<div class="abs" style="left:3px;top:91px;width:102px;height:578px;background:#fff;border-left:1px solid #6b6a60;border-top:1px solid #77756a;border-right:1px solid #aca899;box-sizing:border-box;"></div>
<div class="abs" style="left:105.500px;top:89px;width:1.500px;height:596px;background:#7f7d70"></div>
<div class="abs" style="left:107px;top:75px;width:1px;height:610px;background:#fbfaf4"></div>
<svg class="abs" style="left:0;top:90px" width="105" height="380" viewBox="0 90 105 380">
<path d="M12.500 96.25 V458.25 M12.500 98.25 H20 M12.500 109.5 H20 M12.500 120.75 H20 M12.500 132.0 H20 M12.500 143.25 H20 M26.500 154.5 H35 M26.500 165.75 H35 M26.500 177.0 H35 M26.500 188.25 H35 M26.500 199.5 H35 M26.500 210.75 H35 M12.500 222.0 H20 M26.500 233.25 H35 M26.500 244.5 H35 M26.500 255.75 H35 M12.500 267.0 H20 M26.500 278.25 H35 M26.500 289.5 H35 M26.500 300.75 H35 M26.500 312.0 H35 M26.500 323.25 H35 M26.500 334.5 H35 M26.500 345.75 H35 M26.500 357.0 H35 M26.500 368.25 H35 M12.500 379.5 H20 M12.500 390.75 H20 M12.500 402.0 H20 M12.500 413.25 H20 M12.500 424.5 H20 M12.500 435.75 H20 M12.500 447.0 H20 M12.500 458.25 H20 M26.500 148.25 V210.75 M26.500 227.0 V255.75 M26.500 272.0 V368.25" stroke="#b8b8b8" stroke-width="1" fill="none" stroke-dasharray="1 1"/>
<rect x="21" y="93.25" width="9" height="9.5" fill="#fff" stroke="#222" stroke-width="1.2"/><rect x="21" y="92.95" width="9" height="1.5" fill="#2a2f9a"/><path d="M23 100.75 l5 -5" stroke="#222" stroke-width="1.2" fill="none"/><path d="M23 101.75 h5" stroke="#1c2fb4" stroke-width="0.8" fill="none"/>
<path d="M23.5 104.0 v10 M28 104.0 v10 M20 107.5 h12 M20 111.0 h12" stroke="#1c2fb4" stroke-width="1.2" fill="none" stroke-dasharray="3 0.6"/>
<path d="M20.8 125.25 v-6 q5.5 -3.500 11 0 v6 M20.8 120.55 h11" stroke="#222" stroke-width="1.2" fill="none"/>
<path d="M23 126.5 v6" stroke="#1c2fb4" stroke-width="1.8" fill="none"/><path d="M20.5 132.0 h5 l-2.5 3 z" stroke="#1c2fb4" stroke-width="0.3" fill="#1c2fb4"/><rect x="26" y="132.5" width="2" height="3.5" fill="#d9d21c" stroke="#555" stroke-width="0.5"/><rect x="28.5" y="131.0" width="2.5" height="5" fill="#d9d21c" stroke="#555" stroke-width="0.5"/><path d="M20 136.5 h12" stroke="#111" stroke-width="1.1" fill="none"/>
<path d="M23 137.75 v6" stroke="#1c2fb4" stroke-width="1.8" fill="none"/><path d="M20.5 143.25 h5 l-2.5 3 z" stroke="#1c2fb4" stroke-width="0.3" fill="#1c2fb4"/><circle cx="28.5" cy="140.75" r="2" fill="none" stroke="#111" stroke-width="1"/><path d="M26 146.25 q2.500 -4 5 0" stroke="#111" stroke-width="1" fill="none"/><path d="M20 147.75 h12" stroke="#111" stroke-width="1.1" fill="none"/>
<rect x="9.5" y="140.25" width="6" height="6" fill="#fff" stroke="#8a9aa8" stroke-width="0.9"/>
<path d="M11 143.25 h3" stroke="#000" stroke-width="0.9" fill="none"/>
<path d="M37.0 149.0 v7" stroke="#1c2fb4" stroke-width="1.8" fill="none"/><path d="M34.5 155.5 h5 l-2.5 3 z" stroke="#1c2fb4" stroke-width="0.3" fill="#1c2fb4"/><rect x="40.5" y="149.5" width="5" height="4.5" fill="#bbb" stroke="#444" stroke-width="0.9"/>
<path d="M37.0 160.25 v7" stroke="#1c2fb4" stroke-width="1.8" fill="none"/><path d="M34.5 166.75 h5 l-2.5 3 z" stroke="#1c2fb4" stroke-width="0.3" fill="#1c2fb4"/><path d="M41.0 161.25 v4 M44.0 162.25 v4" stroke="#111" stroke-width="0.9" fill="none"/><path d="M40.0 164.25 l1 1.3 l1 -1.3 M43.0 165.25 l1 1.3 l1 -1.300" stroke="#111" stroke-width="0.8" fill="none"/>
<path d="M37.0 171.5 v7" stroke="#1c2fb4" stroke-width="1.8" fill="none"/><path d="M34.5 178.0 h5 l-2.5 3 z" stroke="#1c2fb4" stroke-width="0.3" fill="#1c2fb4"/><path d="M41.0 171.5 v4 M44.0 172.5 v4" stroke="#111" stroke-width="0.9" fill="none"/><path d="M40.0 174.5 l1 1.3 l1 -1.3 M43.0 175.5 l1 1.3 l1 -1.300" stroke="#111" stroke-width="0.8" fill="none"/><path d="M40.0 179.5 l2 -2 l2 2 l-2 2 z" stroke="#555" stroke-width="0.6" fill="#e8d820"/>
<path d="M37.0 182.75 v7" stroke="#1c2fb4" stroke-width="1.8" fill="none"/><path d="M34.5 189.25 h5 l-2.5 3 z" stroke="#1c2fb4" stroke-width="0.3" fill="#1c2fb4"/><path d="M41.0 182.75 v4 M44.0 183.75 v4" stroke="#111" stroke-width="0.9" fill="none"/><path d="M40.0 185.75 l1 1.3 l1 -1.3 M43.0 186.75 l1 1.3 l1 -1.300" stroke="#111" stroke-width="0.8" fill="none"/><path d="M40.0 190.75 l2 -2 l2 2 l-2 2 z" stroke="#555" stroke-width="0.6" fill="#e8d820"/>
<path d="M37.0 194.0 v7" stroke="#1c2fb4" stroke-width="1.8" fill="none"/><path d="M34.5 200.5 h5 l-2.5 3 z" stroke="#1c2fb4" stroke-width="0.3" fill="#1c2fb4"/><path d="M41.0 194.0 v4 M44.0 195.0 v4" stroke="#111" stroke-width="0.9" fill="none"/><path d="M40.0 197.0 l1 1.3 l1 -1.3 M43.0 198.0 l1 1.3 l1 -1.300" stroke="#111" stroke-width="0.8" fill="none"/><path d="M40.0 202.0 l2 -2 l2 2 l-2 2 z" stroke="#555" stroke-width="0.6" fill="#e8d820"/>
<path d="M37.0 205.25 v6" stroke="#1c2fb4" stroke-width="1.8" fill="none"/><path d="M34.5 210.75 h5 l-2.5 3 z" stroke="#1c2fb4" stroke-width="0.3" fill="#1c2fb4"/><rect x="40.0" y="205.75" width="5.5" height="4.5" fill="#bbb" stroke="#444" stroke-width="0.9"/><path d="M34.5 215.25 h11 M40.5 215.25 v-3 M44.5 215.25 v-3" stroke="#111" stroke-width="1.1" fill="none"/>
<circle cx="26" cy="221.8" r="4.800" fill="#2fc42f" stroke="#127a12" stroke-width="0.9"/><circle cx="24.6" cy="220.3" r="1.7" fill="#b8f4a8"/>
<rect x="9.5" y="219.0" width="6" height="6" fill="#fff" stroke="#8a9aa8" stroke-width="0.9"/>
<path d="M11 222.0 h3" stroke="#000" stroke-width="0.9" fill="none"/>
<circle cx="40.5" cy="233.05" r="4.800" fill="#2fc42f" stroke="#127a12" stroke-width="0.9"/><circle cx="39.1" cy="231.55" r="1.7" fill="#b8f4a8"/>
<path d="M37.0 239.0 v7" stroke="#1c2fb4" stroke-width="1.8" fill="none"/><path d="M34.5 245.5 h5 l-2.5 3 z" stroke="#1c2fb4" stroke-width="0.3" fill="#1c2fb4"/><path d="M41.0 240.0 v4 M44.0 241.0 v4" stroke="#111" stroke-width="0.9" fill="none"/><path d="M40.0 243.0 l1 1.3 l1 -1.3 M43.0 244.0 l1 1.3 l1 -1.300" stroke="#111" stroke-width="0.8" fill="none"/>
<path d="M37.0 250.25 v7" stroke="#1c2fb4" stroke-width="1.8" fill="none"/><path d="M34.5 256.75 h5 l-2.5 3 z" stroke="#1c2fb4" stroke-width="0.3" fill="#1c2fb4"/><path d="M41.0 250.25 v4 M44.0 251.25 v4" stroke="#111" stroke-width="0.9" fill="none"/><path d="M40.0 253.25 l1 1.3 l1 -1.3 M43.0 254.25 l1 1.3 l1 -1.300" stroke="#111" stroke-width="0.8" fill="none"/><path d="M40.0 258.25 l2 -2 l2 2 l-2 2 z" stroke="#555" stroke-width="0.6" fill="#e8d820"/>
<rect x="21.5" y="262.0" width="8" height="10" fill="#f4f0c0" stroke="#222" stroke-width="1.1"/><rect x="23" y="263.5" width="5" height="2.5" fill="#2a50d0"/><path d="M23 268.0 h5 M23 270.0 h5" stroke="#666" stroke-width="0.9" fill="none" stroke-dasharray="1 1"/>
<rect x="9.5" y="264.0" width="6" height="6" fill="#fff" stroke="#8a9aa8" stroke-width="0.9"/>
<path d="M11 267.0 h3" stroke="#000" stroke-width="0.9" fill="none"/>
<path d="M35.5 282.75 v-8 h4 v2" stroke="#222" stroke-width="1.2" fill="none"/><rect x="40.0" y="274.75" width="5.5" height="8" fill="#f0d820" stroke="#222" stroke-width="0.9"/><rect x="41.0" y="275.75" width="3.5" height="2.5" fill="#2a50d0"/>
<path d="M35.5 293.0 l3 -3 h6 l-3 3 z" stroke="#555" stroke-width="0.6" fill="#e0d020"/><circle cx="40.5" cy="290.0" r="2" fill="#2a50d0"/><path d="M38.5 284.5 v3 M42.5 284.5 v3" stroke="#111" stroke-width="1" fill="none"/>
<path d="M37.0 295.25 v7" stroke="#1c2fb4" stroke-width="1.8" fill="none"/><path d="M34.5 301.75 h5 l-2.5 3 z" stroke="#1c2fb4" stroke-width="0.3" fill="#1c2fb4"/><path d="M41.0 296.25 v4 M44.0 297.25 v4" stroke="#111" stroke-width="0.9" fill="none"/><path d="M40.0 299.25 l1 1.3 l1 -1.3 M43.0 300.25 l1 1.3 l1 -1.300" stroke="#111" stroke-width="0.8" fill="none"/>
<path d="M37.0 306.5 v7" stroke="#1c2fb4" stroke-width="1.8" fill="none"/><path d="M34.5 313.0 h5 l-2.5 3 z" stroke="#1c2fb4" stroke-width="0.3" fill="#1c2fb4"/><path d="M41.0 307.5 v4 M44.0 308.5 v4" stroke="#111" stroke-width="0.9" fill="none"/><path d="M40.0 310.5 l1 1.3 l1 -1.3 M43.0 311.5 l1 1.3 l1 -1.300" stroke="#111" stroke-width="0.8" fill="none"/>
<rect x="35.0" y="318.05" width="10.5" height="10" fill="#aaa" stroke="#888" stroke-width="0.6" rx="2.5"/><circle cx="40.2" cy="323.05" r="3.6" fill="none" stroke="#c44" stroke-width="1"/><circle cx="40.2" cy="323.05" r="1.7" fill="none" stroke="#c44" stroke-width="0.9"/>
<rect x="35.0" y="329.3" width="10.5" height="10" fill="#aaa" stroke="#888" stroke-width="0.6" rx="2.5"/><circle cx="40.2" cy="334.3" r="3.6" fill="none" stroke="#c44" stroke-width="1"/><circle cx="40.2" cy="334.3" r="1.7" fill="none" stroke="#c44" stroke-width="0.9"/>
<path d="M35.5 340.75 v10 M45.0 340.75 v10 M35.0 342.75 h11 M35.0 345.75 h11 M35.0 348.75 h11" stroke="#d8232a" stroke-width="1.1" fill="none"/><rect x="37.5" y="341.75" width="2" height="2" fill="#e0c020"/><rect x="41.0" y="344.75" width="2" height="2" fill="#e0c020"/><rect x="38.5" y="347.75" width="2" height="2" fill="#333"/><rect x="41.5" y="341.75" width="2" height="2" fill="#333"/>
<path d="M35.5 352.0 v10 M45.0 352.0 v10 M35.0 354.0 h11 M35.0 357.0 h11 M35.0 360.0 h11" stroke="#d8232a" stroke-width="1.1" fill="none"/><rect x="37.5" y="353.0" width="2" height="2" fill="#e0c020"/><rect x="41.0" y="356.0" width="2" height="2" fill="#e0c020"/><rect x="38.5" y="359.0" width="2" height="2" fill="#333"/><rect x="41.5" y="353.0" width="2" height="2" fill="#333"/>
<path d="M35.5 371.75 h10 M35.5 370.75 l3 -4 l3 2 l3 -3" stroke="#222" stroke-width="1.1" fill="none"/><rect x="39.5" y="364.25" width="3" height="2.5" fill="#e0d020" stroke="#333" stroke-width="0.6"/>
<path d="M20.5 377.0 q5.500 9 11 0" stroke="#2a3fb4" stroke-width="1.6" fill="none"/><path d="M20 376.5 h12 M21 376.0 v6 M31 376.0 v6" stroke="#223" stroke-width="0.9" fill="none"/><path d="M24 382.0 l2 2 l2 -2 z" stroke="#2a3fb4" stroke-width="0.4" fill="#2a3fb4"/>
<path d="M21 385.75 h3 v3.500 h7 v2.500 h-7 v4 h-3 z" stroke="#333" stroke-width="0.9" fill="#e8d820"/>
<rect x="21" y="398.0" width="3.8" height="8.5" fill="#f0e020" stroke="#555" stroke-width="0.9" rx="1"/><rect x="26.5" y="398.0" width="3.8" height="8.5" fill="#f0e020" stroke="#555" stroke-width="0.9" rx="1"/>
<path d="M20.5 408.55 h11 v3.500 h-3.500 v6 h-4 v-6 h-3.500 z" stroke="#157a8a" stroke-width="0.9" fill="#35c4d8"/>
<path d="M20.5 420.5 q2.800 -1.500 5.500 0.5 q2.800 -2 5.500 -0.5 v8 q-2.800 -1.200 -5.500 0.6 q-2.800 -1.800 -5.500 -0.600 z" stroke="#222" stroke-width="1" fill="#f4f0d0"/><path d="M26 421.0 v8" stroke="#222" stroke-width="0.8" fill="none"/>
<path d="M21 440.25 h10 l-4 -5 z" stroke="#222" stroke-width="1" fill="#9ab"/><path d="M24 438.25 l6 -7" stroke="#1a7a3a" stroke-width="1.5" fill="none"/><path d="M21.5 431.25 v8" stroke="#222" stroke-width="1.1" fill="none"/>
<rect x="9.5" y="432.75" width="6" height="6" fill="#fff" stroke="#8a9aa8" stroke-width="0.9"/>
<path d="M11 435.75 h3" stroke="#000" stroke-width="0.9" fill="none"/>
<path d="M12.500 434.25 v3" stroke="#000" stroke-width="0.9" fill="none"/>
<rect x="22" y="442.0" width="8" height="10" fill="#444" stroke="#111" stroke-width="1"/><rect x="23.5" y="443.5" width="5" height="2.5" fill="#ccc"/><rect x="23.5" y="447.5" width="5" height="1.5" fill="#999"/>
<rect x="9.5" y="444.0" width="6" height="6" fill="#fff" stroke="#8a9aa8" stroke-width="0.9"/>
<path d="M11 447.0 h3" stroke="#000" stroke-width="0.9" fill="none"/>
<path d="M12.500 445.5 v3" stroke="#000" stroke-width="0.9" fill="none"/>
<path d="M21.5 453.75 l9 9" stroke="#333" stroke-width="1.7" fill="none"/><path d="M30.5 454.25 l-8 8" stroke="#a86a1a" stroke-width="1.8" fill="none"/><path d="M27.5 453.75 l3 -1.500 l1.500 2" stroke="#333" stroke-width="1.4" fill="none"/>
<rect x="9.5" y="455.25" width="6" height="6" fill="#fff" stroke="#8a9aa8" stroke-width="0.9"/>
<path d="M11 458.25 h3" stroke="#000" stroke-width="0.9" fill="none"/>
<path d="M12.500 456.75 v3" stroke="#000" stroke-width="0.9" fill="none"/>
</svg>
<div class="abs" style="left:0;top:90px;width:103.500px;height:380px;overflow:hidden">
<div class="t" style="left:36.5px;top:3.05px">Projekt</div>
<div class="t" style="left:36.5px;top:14.3px">Linienraster und Ge</div>
<div class="t" style="left:36.5px;top:25.55px">Struktur</div>
<div class="t" style="left:36.5px;top:36.8px">Belastung</div>
<div class="t" style="left:36.5px;top:48.05px">Lastfälle und LF-Ko</div>
<div class="t" style="left:50.5px;top:59.3px">Lastfälle</div>
<div class="t" style="left:50.5px;top:70.55px">Lastgruppen</div>
<div class="t" style="left:50.5px;top:81.8px">LF-Kombination</div>
<div class="t" style="left:50.5px;top:93.05px">Nichtlineare LF</div>
<div class="t" style="left:50.5px;top:104.3px">Stahlbeton-LFK</div>
<div class="t" style="left:50.5px;top:115.55px">Ergebnisklasse</div>
<div class="t" style="left:36.5px;top:126.8px">Dynamik</div>
<div class="t" style="left:50.5px;top:138.05px">Massen</div>
<div class="t" style="left:50.5px;top:149.3px">Massengruppe</div>
<div class="t" style="left:50.5px;top:160.55px">Massengruppe</div>
<div class="t" style="left:36.5px;top:171.8px">Berechnung, FE-N</div>
<div class="t" style="left:50.5px;top:183.05px">Strukturdaten k</div>
<div class="t" style="left:50.5px;top:194.3px">Teile/Knoten k</div>
<div class="t" style="left:50.5px;top:205.55px">FE-Netz einste</div>
<div class="t" style="left:50.5px;top:216.8px">Rechenkern ei</div>
<div class="t" style="left:50.5px;top:228.05px">Lokale Netzve</div>
<div class="t" style="left:50.5px;top:239.3px">Netzgenerierun</div>
<div class="t" style="left:50.5px;top:250.55px">Berechnung</div>
<div class="t" style="left:50.5px;top:261.8px">Hintergrundber</div>
<div class="t" style="left:50.5px;top:273.05px">Autodesign</div>
<div class="t" style="left:36.5px;top:284.3px">Ergebnisse</div>
<div class="t" style="left:36.5px;top:295.55px">Stahl</div>
<div class="t" style="left:36.5px;top:306.8px">Holz</div>
<div class="t" style="left:36.5px;top:318.05px">Beton</div>
<div class="t" style="left:36.5px;top:329.3px">Dokument</div>
<div class="t" style="left:36.5px;top:340.55px">Zeichnungswerkze</div>
<div class="t" style="left:36.5px;top:351.8px">Bibliotheken</div>
<div class="t" style="left:36.5px;top:363.05px">Werkzeuge</div>
</div>
<div class="abs" style="left:4px;top:655px;width:100px;height:12px;background:#f4f3ec"></div>
<div class="abs" style="left:5px;top:655px;width:13px;height:12px;background:linear-gradient(135deg,#dfe8fd,#b8caf6);border:1px solid #c4d2f8;border-radius:2px;box-sizing:border-box"><svg class="abs" style="left:-1px;top:-1px" width="13" height="12" viewBox="0 0 13 12"><path d="M7.500 3 l-3 3 l3 3" stroke="#3d57a8" stroke-width="1.800" fill="none"/></svg></div>
<div class="abs" style="left:91px;top:655px;width:13px;height:12px;background:linear-gradient(135deg,#dfe8fd,#b8caf6);border:1px solid #c4d2f8;border-radius:2px;box-sizing:border-box"><svg class="abs" style="left:-1px;top:-1px" width="13" height="12" viewBox="0 0 13 12"><path d="M5 3 l3 3 l-3 3" stroke="#3d57a8" stroke-width="1.800" fill="none"/></svg></div>
<div class="abs" style="left:20px;top:655.500px;width:41px;height:11px;background:linear-gradient(#d6e0fb,#bccdf6);border:1px solid #a9bdf0;border-radius:2px;box-sizing:border-box"></div>
<div class="abs" style="left:38px;top:659px;width:5px;height:4px;background:repeating-linear-gradient(90deg,#8fa6e6 0 1px,#eef 1px 2px)"></div>
<div class="abs" style="left:4px;top:669px;width:24px;height:16px;background:#fcfcf8;border:1px solid #8c8a7c;border-top:none;border-radius:0 0 3px 3px;box-sizing:border-box"></div>
<svg class="abs" style="left:8px;top:672px" width="14" height="11" viewBox="0 0 14 11"><rect x="1" y="1" width="2.500" height="2.500" fill="none" stroke="#111" stroke-width="0.9"/><path d="M3.500 2.500 h2.500 v5 M4 5 h2" stroke="#111" stroke-width="0.9" fill="none"/><rect x="6.500" y="3.500" width="4" height="3" fill="#e02020"/><rect x="6.500" y="7" width="4" height="3" fill="#20b8c8"/></svg>
<div class="abs" style="left:110px;top:75px;width:761px;height:523px;background:#fff;border-top:1px solid #e4e1d2;box-sizing:border-box"></div>
<svg class="abs" style="left:110px;top:76px" width="761" height="522" viewBox="110 76 761 522">
<defs><pattern id="rf" width="3" height="2" patternUnits="userSpaceOnUse"><rect width="3" height="2" fill="#f8f8f8"/><rect x="0" y="0" width="1" height="1" fill="#e4e4e4"/><rect x="1.500" y="1" width="1" height="1" fill="#e7e7e7"/></pattern></defs>
<line x1="125.84" y1="367.67" x2="311.52" y2="219.08" stroke="#3a3a3a" stroke-width="0.9" stroke-dasharray="9 6"/>
<line x1="174.17" y1="385.08" x2="360.42" y2="236.52" stroke="#3a3a3a" stroke-width="0.9" stroke-dasharray="9 6"/>
<line x1="222.5" y1="402.48" x2="409.33" y2="253.96" stroke="#3a3a3a" stroke-width="0.9" stroke-dasharray="9 6"/>
<line x1="270.83" y1="419.89" x2="458.23" y2="271.39" stroke="#3a3a3a" stroke-width="0.9" stroke-dasharray="9 6"/>
<line x1="319.15" y1="437.29" x2="507.13" y2="288.83" stroke="#3a3a3a" stroke-width="0.9" stroke-dasharray="9 6"/>
<line x1="367.48" y1="454.7" x2="556.03" y2="306.27" stroke="#3a3a3a" stroke-width="0.9" stroke-dasharray="9 6"/>
<line x1="415.81" y1="472.11" x2="604.94" y2="323.71" stroke="#3a3a3a" stroke-width="0.9" stroke-dasharray="9 6"/>
<line x1="464.14" y1="489.51" x2="653.84" y2="341.15" stroke="#3a3a3a" stroke-width="0.9" stroke-dasharray="9 6"/>
<line x1="512.47" y1="506.92" x2="702.74" y2="358.58" stroke="#3a3a3a" stroke-width="0.9" stroke-dasharray="9 6"/>
<line x1="560.79" y1="524.32" x2="751.64" y2="376.02" stroke="#3a3a3a" stroke-width="0.9" stroke-dasharray="9 6"/>
<line x1="609.12" y1="541.73" x2="800.54" y2="393.46" stroke="#3a3a3a" stroke-width="0.9" stroke-dasharray="9 6"/>
<line x1="657.45" y1="559.14" x2="849.45" y2="410.9" stroke="#3a3a3a" stroke-width="0.9" stroke-dasharray="9 6"/>
<line x1="133.62" y1="350.22" x2="694.85" y2="552.16" stroke="#3a3a3a" stroke-width="0.9" stroke-dasharray="9 6"/>
<line x1="165.34" y1="324.82" x2="727.71" y2="526.83" stroke="#3a3a3a" stroke-width="0.9" stroke-dasharray="9 6"/>
<line x1="197.06" y1="299.42" x2="760.57" y2="501.49" stroke="#3a3a3a" stroke-width="0.9" stroke-dasharray="9 6"/>
<line x1="228.78" y1="274.01" x2="793.43" y2="476.15" stroke="#3a3a3a" stroke-width="0.9" stroke-dasharray="9 6"/>
<line x1="260.51" y1="248.61" x2="826.29" y2="450.81" stroke="#3a3a3a" stroke-width="0.9" stroke-dasharray="9 6"/>
<line x1="292.23" y1="223.21" x2="859.15" y2="425.47" stroke="#3a3a3a" stroke-width="0.9" stroke-dasharray="9 6"/>
<line x1="138.25" y1="241" x2="138.25" y2="375" stroke="#3a3a3a" stroke-width="0.9" stroke-dasharray="7 4"/>
<line x1="172.5" y1="214" x2="172.5" y2="355" stroke="#3a3a3a" stroke-width="0.9" stroke-dasharray="7 4"/>
<line x1="204.5" y1="224" x2="204.5" y2="327.5" stroke="#3a3a3a" stroke-width="0.9" stroke-dasharray="7 4"/>
<line x1="138.25" y1="375" x2="138.25" y2="392" stroke="#222" stroke-width="0.8"/>
<line x1="366" y1="372" x2="366" y2="462" stroke="#3a3a3a" stroke-width="0.9" stroke-dasharray="7 4"/>
<line x1="333.5" y1="432" x2="333.5" y2="490" stroke="#3a3a3a" stroke-width="0.9" stroke-dasharray="7 4"/>
<line x1="97.46" y1="355.61" x2="660.54" y2="558.39" stroke="#222" stroke-width="1"/>
<line x1="118.51" y1="371.29" x2="138.83" y2="355.04" stroke="#222" stroke-width="0.8"/>
<line x1="166.83" y1="388.7" x2="187.2" y2="372.44" stroke="#222" stroke-width="0.8"/>
<line x1="215.14" y1="406.1" x2="235.57" y2="389.85" stroke="#222" stroke-width="0.8"/>
<line x1="263.45" y1="423.51" x2="283.95" y2="407.26" stroke="#222" stroke-width="0.8"/>
<line x1="311.76" y1="440.91" x2="332.32" y2="424.67" stroke="#222" stroke-width="0.8"/>
<line x1="360.07" y1="458.32" x2="380.7" y2="442.08" stroke="#222" stroke-width="0.8"/>
<line x1="408.38" y1="475.72" x2="429.07" y2="459.49" stroke="#222" stroke-width="0.8"/>
<line x1="456.69" y1="493.13" x2="477.44" y2="476.9" stroke="#222" stroke-width="0.8"/>
<line x1="505.0" y1="510.53" x2="525.82" y2="494.3" stroke="#222" stroke-width="0.8"/>
<line x1="553.31" y1="527.94" x2="574.19" y2="511.71" stroke="#222" stroke-width="0.8"/>
<line x1="601.63" y1="545.34" x2="622.57" y2="529.12" stroke="#222" stroke-width="0.8"/>
<line x1="649.94" y1="562.75" x2="670.94" y2="546.53" stroke="#222" stroke-width="0.8"/>
<text x="144.73" y="377.79" font-family="Liberation Sans, sans-serif" font-size="5.600" fill="#111" text-anchor="middle" transform="rotate(19.8 144.73 377.79)">5000</text>
<text x="193.05" y="395.19" font-family="Liberation Sans, sans-serif" font-size="5.600" fill="#111" text-anchor="middle" transform="rotate(19.8 193.05 395.19)">5000</text>
<text x="241.37" y="412.6" font-family="Liberation Sans, sans-serif" font-size="5.600" fill="#111" text-anchor="middle" transform="rotate(19.8 241.37 412.6)">5000</text>
<text x="289.69" y="430.01" font-family="Liberation Sans, sans-serif" font-size="5.600" fill="#111" text-anchor="middle" transform="rotate(19.8 289.69 430.01)">5000</text>
<text x="338.01" y="447.41" font-family="Liberation Sans, sans-serif" font-size="5.600" fill="#111" text-anchor="middle" transform="rotate(19.8 338.01 447.41)">5000</text>
<text x="386.32" y="464.82" font-family="Liberation Sans, sans-serif" font-size="5.600" fill="#111" text-anchor="middle" transform="rotate(19.8 386.32 464.82)">5000</text>
<text x="434.64" y="482.22" font-family="Liberation Sans, sans-serif" font-size="5.600" fill="#111" text-anchor="middle" transform="rotate(19.8 434.64 482.22)">5000</text>
<text x="482.96" y="499.63" font-family="Liberation Sans, sans-serif" font-size="5.600" fill="#111" text-anchor="middle" transform="rotate(19.8 482.96 499.63)">5000</text>
<text x="531.28" y="517.03" font-family="Liberation Sans, sans-serif" font-size="5.600" fill="#111" text-anchor="middle" transform="rotate(19.8 531.28 517.03)">5000</text>
<text x="579.6" y="534.44" font-family="Liberation Sans, sans-serif" font-size="5.600" fill="#111" text-anchor="middle" transform="rotate(19.8 579.6 534.44)">5000</text>
<text x="627.92" y="551.84" font-family="Liberation Sans, sans-serif" font-size="5.600" fill="#111" text-anchor="middle" transform="rotate(19.8 627.92 551.84)">5000</text>
<line x1="97.46" y1="355.61" x2="132.75" y2="356.53" stroke="#222" stroke-width="0.8"/>
<line x1="103.8" y1="350.53" x2="155.54" y2="369.15" stroke="#222" stroke-width="0.8"/>
<text x="130.8" y="366.51" font-family="Liberation Sans, sans-serif" font-size="5.600" fill="#111" text-anchor="middle" transform="rotate(19.8 130.8 366.51)">5000</text>
<line x1="363.92" y1="468.58" x2="658.48" y2="574.75" stroke="#3a3a3a" stroke-width="0.9" stroke-dasharray="9 6"/>
<ellipse cx="108.65" cy="376.95" rx="3.2" ry="2.3" fill="#fff" stroke="#222" stroke-width="0.8"/><circle cx="108.65" cy="376.95" r="0.800" fill="#444"/>
<ellipse cx="156.94" cy="394.35" rx="3.2" ry="2.3" fill="#fff" stroke="#222" stroke-width="0.8"/><circle cx="156.94" cy="394.35" r="0.800" fill="#444"/>
<ellipse cx="205.22" cy="411.75" rx="3.2" ry="2.3" fill="#fff" stroke="#222" stroke-width="0.8"/><circle cx="205.22" cy="411.75" r="0.800" fill="#444"/>
<ellipse cx="253.51" cy="429.16" rx="3.2" ry="2.3" fill="#fff" stroke="#222" stroke-width="0.8"/><circle cx="253.51" cy="429.16" r="0.800" fill="#444"/>
<ellipse cx="301.8" cy="446.56" rx="3.2" ry="2.3" fill="#fff" stroke="#222" stroke-width="0.8"/><circle cx="301.8" cy="446.56" r="0.800" fill="#444"/>
<ellipse cx="350.08" cy="463.96" rx="3.2" ry="2.3" fill="#fff" stroke="#222" stroke-width="0.8"/><circle cx="350.08" cy="463.96" r="0.800" fill="#444"/>
<ellipse cx="398.37" cy="481.37" rx="3.2" ry="2.3" fill="#fff" stroke="#222" stroke-width="0.8"/><circle cx="398.37" cy="481.37" r="0.800" fill="#444"/>
<ellipse cx="446.66" cy="498.77" rx="3.2" ry="2.3" fill="#fff" stroke="#222" stroke-width="0.8"/><circle cx="446.66" cy="498.77" r="0.800" fill="#444"/>
<ellipse cx="494.94" cy="516.18" rx="3.2" ry="2.3" fill="#fff" stroke="#222" stroke-width="0.8"/><circle cx="494.94" cy="516.18" r="0.800" fill="#444"/>
<ellipse cx="543.23" cy="533.58" rx="3.2" ry="2.3" fill="#fff" stroke="#222" stroke-width="0.8"/><circle cx="543.23" cy="533.58" r="0.800" fill="#444"/>
<ellipse cx="591.52" cy="550.98" rx="3.2" ry="2.3" fill="#fff" stroke="#222" stroke-width="0.8"/><circle cx="591.52" cy="550.98" r="0.800" fill="#444"/>
<ellipse cx="639.8" cy="568.39" rx="3.2" ry="2.3" fill="#fff" stroke="#222" stroke-width="0.8"/><circle cx="639.8" cy="568.39" r="0.800" fill="#444"/>
<ellipse cx="94.66" cy="373.01" rx="2.3" ry="3.2" fill="#fff" stroke="#222" stroke-width="0.8"/><circle cx="94.66" cy="373.01" r="0.800" fill="#444"/>
<line x1="272.87" y1="452.76" x2="633.72" y2="582.92" stroke="#222" stroke-width="1"/>
<line x1="265.16" y1="458.85" x2="625.84" y2="589.0" stroke="#222" stroke-width="1"/>
<line x1="280.25" y1="449.14" x2="262.6" y2="463.1" stroke="#222" stroke-width="0.8"/>
<line x1="311.14" y1="460.28" x2="293.45" y2="474.24" stroke="#222" stroke-width="0.8"/>
<line x1="344.92" y1="472.46" x2="327.19" y2="486.42" stroke="#222" stroke-width="0.8"/>
<line x1="393.18" y1="489.86" x2="375.4" y2="503.82" stroke="#222" stroke-width="0.8"/>
<line x1="441.44" y1="507.27" x2="423.6" y2="521.21" stroke="#222" stroke-width="0.8"/>
<line x1="489.7" y1="524.67" x2="471.81" y2="538.61" stroke="#222" stroke-width="0.8"/>
<line x1="537.96" y1="542.07" x2="520.01" y2="556.01" stroke="#222" stroke-width="0.8"/>
<line x1="586.22" y1="559.47" x2="568.22" y2="573.41" stroke="#222" stroke-width="0.8"/>
<line x1="634.48" y1="576.88" x2="616.42" y2="590.81" stroke="#222" stroke-width="0.8"/>
<text x="287.02" y="461.56" font-family="Liberation Sans, sans-serif" font-size="5.600" fill="#111" text-anchor="middle" transform="rotate(19.8 287.02 461.56)">5000</text>
<text x="319.34" y="473.22" font-family="Liberation Sans, sans-serif" font-size="5.600" fill="#111" text-anchor="middle" transform="rotate(19.8 319.34 473.22)">5000</text>
<text x="360.33" y="488.01" font-family="Liberation Sans, sans-serif" font-size="5.600" fill="#111" text-anchor="middle" transform="rotate(19.8 360.33 488.01)">5000</text>
<text x="408.57" y="505.41" font-family="Liberation Sans, sans-serif" font-size="5.600" fill="#111" text-anchor="middle" transform="rotate(19.8 408.57 505.41)">5000</text>
<text x="456.8" y="522.81" font-family="Liberation Sans, sans-serif" font-size="5.600" fill="#111" text-anchor="middle" transform="rotate(19.8 456.8 522.81)">5000</text>
<text x="505.03" y="540.21" font-family="Liberation Sans, sans-serif" font-size="5.600" fill="#111" text-anchor="middle" transform="rotate(19.8 505.03 540.21)">5000</text>
<text x="553.26" y="557.62" font-family="Liberation Sans, sans-serif" font-size="5.600" fill="#111" text-anchor="middle" transform="rotate(19.8 553.26 557.62)">5000</text>
<text x="601.5" y="575.02" font-family="Liberation Sans, sans-serif" font-size="5.600" fill="#111" text-anchor="middle" transform="rotate(19.8 601.5 575.02)">5800</text>
<text x="451.42" y="529.77" font-family="Liberation Sans, sans-serif" font-size="5.600" fill="#111" text-anchor="middle" transform="rotate(19.8 451.42 529.77)">35000</text>
<text x="352.59" y="494.1" font-family="Liberation Sans, sans-serif" font-size="5.600" fill="#111" text-anchor="middle" transform="rotate(19.8 352.59 494.1)">5000</text>
<text x="545.42" y="563.7" font-family="Liberation Sans, sans-serif" font-size="5.600" fill="#111" text-anchor="middle" transform="rotate(19.8 545.42 563.7)">5000</text>
<ellipse cx="269.99" cy="476.12" rx="3.2" ry="2.3" fill="#fff" stroke="#222" stroke-width="0.8"/><circle cx="269.99" cy="476.12" r="0.800" fill="#444"/>
<ellipse cx="318.17" cy="493.52" rx="3.2" ry="2.3" fill="#fff" stroke="#222" stroke-width="0.8"/><circle cx="318.17" cy="493.52" r="0.800" fill="#444"/>
<ellipse cx="366.35" cy="510.92" rx="3.2" ry="2.3" fill="#fff" stroke="#222" stroke-width="0.8"/><circle cx="366.35" cy="510.92" r="0.800" fill="#444"/>
<ellipse cx="414.52" cy="528.32" rx="3.2" ry="2.3" fill="#fff" stroke="#222" stroke-width="0.8"/><circle cx="414.52" cy="528.32" r="0.800" fill="#444"/>
<ellipse cx="462.7" cy="545.71" rx="3.2" ry="2.3" fill="#fff" stroke="#222" stroke-width="0.8"/><circle cx="462.7" cy="545.71" r="0.800" fill="#444"/>
<ellipse cx="510.88" cy="563.11" rx="3.2" ry="2.3" fill="#fff" stroke="#222" stroke-width="0.8"/><circle cx="510.88" cy="563.11" r="0.800" fill="#444"/>
<ellipse cx="559.06" cy="580.51" rx="3.2" ry="2.3" fill="#fff" stroke="#222" stroke-width="0.8"/><circle cx="559.06" cy="580.51" r="0.800" fill="#444"/>
<ellipse cx="607.23" cy="597.91" rx="3.2" ry="2.3" fill="#fff" stroke="#222" stroke-width="0.8"/><circle cx="607.23" cy="597.91" r="0.800" fill="#444"/>
<line x1="267.35" y1="433.78" x2="363.92" y2="468.58" stroke="#3a3a3a" stroke-width="0.9" stroke-dasharray="9 6"/>
<line x1="678.83" y1="569.44" x2="875.05" y2="418.18" stroke="#222" stroke-width="1"/>
<line x1="681.31" y1="547.29" x2="707.43" y2="556.69" stroke="#222" stroke-width="0.8"/>
<line x1="714.14" y1="521.95" x2="740.32" y2="531.35" stroke="#222" stroke-width="0.8"/>
<line x1="746.97" y1="496.61" x2="773.2" y2="506.02" stroke="#222" stroke-width="0.8"/>
<line x1="779.8" y1="471.27" x2="806.09" y2="480.68" stroke="#222" stroke-width="0.8"/>
<line x1="812.63" y1="445.93" x2="838.97" y2="455.34" stroke="#222" stroke-width="0.8"/>
<line x1="845.46" y1="420.59" x2="871.86" y2="430.01" stroke="#222" stroke-width="0.8"/>
<line x1="673.59" y1="563.09" x2="690.99" y2="569.36" stroke="#222" stroke-width="0.8"/>
<text x="710.59" y="542.22" font-family="Liberation Sans, sans-serif" font-size="5.600" fill="#111" text-anchor="middle" transform="rotate(-38 710.59 542.22)">5000</text>
<text x="743.45" y="516.88" font-family="Liberation Sans, sans-serif" font-size="5.600" fill="#111" text-anchor="middle" transform="rotate(-38 743.45 516.88)">5000</text>
<text x="776.32" y="491.54" font-family="Liberation Sans, sans-serif" font-size="5.600" fill="#111" text-anchor="middle" transform="rotate(-38 776.32 491.54)">5000</text>
<text x="809.18" y="466.21" font-family="Liberation Sans, sans-serif" font-size="5.600" fill="#111" text-anchor="middle" transform="rotate(-38 809.18 466.21)">5000</text>
<text x="842.04" y="440.87" font-family="Liberation Sans, sans-serif" font-size="5.600" fill="#111" text-anchor="middle" transform="rotate(-38 842.04 440.87)">5000</text>
<text x="783.75" y="495.69" font-family="Liberation Sans, sans-serif" font-size="5.600" fill="#111" text-anchor="middle" transform="rotate(-38 783.75 495.69)">25000</text>
<text x="679.39" y="565.18" font-family="Liberation Sans, sans-serif" font-size="5.600" fill="#111" text-anchor="middle" transform="rotate(-38 679.39 565.18)">5000</text>
<ellipse cx="758.64" cy="534.22" rx="3.2" ry="2.3" fill="#fff" stroke="#222" stroke-width="0.8"/><circle cx="758.64" cy="534.22" r="0.800" fill="#444"/>
<ellipse cx="791.55" cy="508.88" rx="3.2" ry="2.3" fill="#fff" stroke="#222" stroke-width="0.8"/><circle cx="791.55" cy="508.88" r="0.800" fill="#444"/>
<ellipse cx="824.47" cy="483.55" rx="3.2" ry="2.3" fill="#fff" stroke="#222" stroke-width="0.8"/><circle cx="824.47" cy="483.55" r="0.800" fill="#444"/>
<ellipse cx="857.38" cy="458.21" rx="3.2" ry="2.3" fill="#fff" stroke="#222" stroke-width="0.8"/><circle cx="857.38" cy="458.21" r="0.800" fill="#444"/>
<ellipse cx="890.3" cy="432.88" rx="3.2" ry="2.3" fill="#fff" stroke="#222" stroke-width="0.8"/><circle cx="890.3" cy="432.88" r="0.800" fill="#444"/>
<ellipse cx="716" cy="559.6" rx="3.2" ry="2.3" fill="#fff" stroke="#222" stroke-width="0.8"/><circle cx="716" cy="559.6" r="0.800" fill="#444"/>
<ellipse cx="726" cy="559.6" rx="3.2" ry="2.3" fill="#fff" stroke="#222" stroke-width="0.8"/><circle cx="726" cy="559.6" r="0.800" fill="#444"/>
<ellipse cx="683.5" cy="586" rx="3.2" ry="2.3" fill="#fff" stroke="#222" stroke-width="0.8"/><circle cx="683.5" cy="586" r="0.800" fill="#444"/>
<path d="M322 93 V127 M327.500 88 V131" stroke="#222" stroke-width="1" fill="none"/>
<path d="M309 104 l12 -7 M309 108 l12 -7 M312 116 l12 -8" stroke="#222" stroke-width="0.8" fill="none"/>
<ellipse cx="336" cy="87" rx="2.500" ry="3.500" fill="none" stroke="#222" stroke-width="0.9"/>
<ellipse cx="336" cy="94.500" rx="2.500" ry="3.500" fill="none" stroke="#222" stroke-width="0.9"/>
<ellipse cx="336" cy="102" rx="2.500" ry="3.500" fill="none" stroke="#222" stroke-width="0.9"/>
<line x1="139.56" y1="243.51" x2="152.26" y2="233.35" stroke="#222" stroke-width="0.9"/>
<line x1="164.95" y1="223.19" x2="177.64" y2="213.03" stroke="#222" stroke-width="0.9"/>
<line x1="190.33" y1="202.87" x2="203.02" y2="192.71" stroke="#222" stroke-width="0.9"/>
<line x1="215.71" y1="182.55" x2="228.41" y2="172.39" stroke="#222" stroke-width="0.9"/>
<line x1="241.1" y1="162.23" x2="253.79" y2="152.07" stroke="#222" stroke-width="0.9"/>
<line x1="266.48" y1="141.91" x2="279.17" y2="131.75" stroke="#222" stroke-width="0.9"/>
<line x1="287.11" y1="125.4" x2="299.8" y2="115.24" stroke="#222" stroke-width="0.9"/>
<line x1="172.5" y1="224" x2="172.5" y2="215" stroke="#222" stroke-width="0.9"/>
<line x1="204.5" y1="198.5" x2="204.5" y2="189.5" stroke="#222" stroke-width="0.9"/>
<line x1="237.5" y1="172" x2="237.5" y2="163" stroke="#222" stroke-width="0.9"/>
<line x1="270" y1="146" x2="270" y2="137" stroke="#222" stroke-width="0.9"/>
<line x1="234.66" y1="336.83" x2="244.85" y2="328.7" stroke="#444" stroke-width="0.7"/>
<line x1="236.16" y1="338.83" x2="246.35" y2="330.7" stroke="#444" stroke-width="0.7"/>
<line x1="277.64" y1="302.54" x2="287.83" y2="294.42" stroke="#444" stroke-width="0.7"/>
<line x1="279.14" y1="304.54" x2="289.33" y2="296.42" stroke="#444" stroke-width="0.7"/>
<line x1="319.03" y1="269.53" x2="329.22" y2="261.4" stroke="#444" stroke-width="0.7"/>
<line x1="320.53" y1="271.53" x2="330.72" y2="263.4" stroke="#444" stroke-width="0.7"/>
<line x1="163.26" y1="346.15" x2="173.42" y2="338.02" stroke="#444" stroke-width="0.7"/>
<line x1="164.76" y1="348.15" x2="174.92" y2="340.02" stroke="#444" stroke-width="0.7"/>
<line x1="364.62" y1="289.5" x2="374.84" y2="281.38" stroke="#444" stroke-width="0.7"/>
<line x1="366.12" y1="291.5" x2="376.34" y2="283.38" stroke="#444" stroke-width="0.7"/>
<line x1="163.48" y1="362.8" x2="254.7" y2="289.91" stroke="#222" stroke-width="0.9"/>
<line x1="163.76" y1="372.11" x2="265.52" y2="290.84" stroke="#222" stroke-width="0.9"/>
<text x="192.84" y="336.54" font-family="Liberation Sans, sans-serif" font-size="5.600" fill="#111" text-anchor="middle" transform="rotate(-38 192.84 336.54)">5000</text>
<text x="229.39" y="307.33" font-family="Liberation Sans, sans-serif" font-size="5.600" fill="#111" text-anchor="middle" transform="rotate(-38 229.39 307.33)">5000</text>
<text x="236.9" y="313.7" font-family="Liberation Sans, sans-serif" font-size="5.600" fill="#111" text-anchor="middle" transform="rotate(-38 236.9 313.7)">25000</text>
<line x1="189.58" y1="333.52" x2="211.4" y2="341.36" stroke="#222" stroke-width="0.8"/>
<line x1="221.35" y1="308.13" x2="243.21" y2="315.97" stroke="#222" stroke-width="0.8"/>
<line x1="237.5" y1="282.5" x2="237.5" y2="300" stroke="#222" stroke-width="0.9"/>
<ellipse cx="182.63" cy="366.01" rx="2.3" ry="3.2" fill="#fff" stroke="#222" stroke-width="0.8"/><circle cx="182.63" cy="366.01" r="0.800" fill="#444"/>
<ellipse cx="212.85" cy="341.88" rx="2.3" ry="3.2" fill="#fff" stroke="#222" stroke-width="0.8"/><circle cx="212.85" cy="341.88" r="0.800" fill="#444"/>
<ellipse cx="244.67" cy="316.49" rx="2.3" ry="3.2" fill="#fff" stroke="#222" stroke-width="0.8"/><circle cx="244.67" cy="316.49" r="0.800" fill="#444"/>
<ellipse cx="274.9" cy="292.36" rx="2.3" ry="3.2" fill="#fff" stroke="#222" stroke-width="0.8"/><circle cx="274.9" cy="292.36" r="0.800" fill="#444"/>
<ellipse cx="251" cy="286" rx="2.3" ry="3.2" fill="#fff" stroke="#222" stroke-width="0.8"/><circle cx="251" cy="286" r="0.800" fill="#444"/>
<ellipse cx="268.7" cy="295" rx="2.3" ry="3.2" fill="#fff" stroke="#222" stroke-width="0.8"/><circle cx="268.7" cy="295" r="0.800" fill="#444"/>
<polygon points="451.02,277.11 845.73,417.91 840.8,421.71 446.22,280.91" fill="#b0b0b0"/>
<polygon points="446.22,280.91 840.8,421.71 840.8,430.21 446.22,289.41" fill="#8a8a8a"/>
<polygon points="288.43,403.15 681.59,544.61 676.67,548.41 283.62,406.96" fill="#b4b4b4" stroke="#777" stroke-width="0.5"/>
<polygon points="283.62,406.96 676.67,548.41 676.67,556.91 283.62,415.46" fill="#8c8c8c" stroke="#6a6a6a" stroke-width="0.5"/>
<rect x="330.92" y="424.24" width="7" height="9.5" fill="#9a9a9a" stroke="#5a5a5a" stroke-width="0.500"/>
<rect x="379.29" y="441.65" width="7" height="9.5" fill="#9a9a9a" stroke="#5a5a5a" stroke-width="0.500"/>
<rect x="427.67" y="459.06" width="7" height="9.5" fill="#9a9a9a" stroke="#5a5a5a" stroke-width="0.500"/>
<rect x="476.04" y="476.47" width="7" height="9.5" fill="#9a9a9a" stroke="#5a5a5a" stroke-width="0.500"/>
<rect x="524.42" y="493.87" width="7" height="9.5" fill="#9a9a9a" stroke="#5a5a5a" stroke-width="0.500"/>
<rect x="572.79" y="511.28" width="7" height="9.5" fill="#9a9a9a" stroke="#5a5a5a" stroke-width="0.500"/>
<rect x="621.16" y="528.69" width="7" height="9.5" fill="#9a9a9a" stroke="#5a5a5a" stroke-width="0.500"/>
<rect x="669.54" y="546.1" width="7" height="9.5" fill="#9a9a9a" stroke="#5a5a5a" stroke-width="0.500"/>
<polygon points="669.41,545.79 838.4,415.29 845.73,417.91 676.67,548.41" fill="#a8a8a8" stroke="#666" stroke-width="0.5"/>
<polygon points="676.67,548.41 845.73,417.91 845.73,426.41 676.67,556.91" fill="#2e2e2e"/>
<rect x="782.73" y="399.06" width="16" height="9" fill="#9c9c9c" stroke="#666" stroke-width="0.500"/>
<line x1="790.73" y1="401.06" x2="790.73" y2="304.76" stroke="#1f5a1f" stroke-width="5"/>
<line x1="790.73" y1="401.06" x2="790.73" y2="304.76" stroke="#2f7f2f" stroke-width="2"/>
<polygon points="143.3,246.7 675.5,438.2 839.6,311.5 302.0,119.7" fill="url(#rf)"/>
<clipPath id="rc"><polygon points="143.3,246.7 675.5,438.2 839.6,311.5 302.0,119.7"/></clipPath><g clip-path="url(#rc)">
<line x1="453.51" y1="280.22" x2="839.6" y2="417.97" stroke="#a4a4a4" stroke-width="13" stroke-dasharray="1 1" opacity="0.85"/>
<line x1="453.51" y1="286.1" x2="839.6" y2="423.85" stroke="#b0b0b0" stroke-width="0.7" stroke-dasharray="1 1"/>
<line x1="453.51" y1="283.43" x2="839.6" y2="421.18" stroke="#b0b0b0" stroke-width="0.7" stroke-dasharray="1 1"/>
<line x1="453.51" y1="280.75" x2="839.6" y2="418.5" stroke="#b0b0b0" stroke-width="0.7" stroke-dasharray="1 1"/>
<line x1="453.51" y1="278.08" x2="839.6" y2="415.82" stroke="#b0b0b0" stroke-width="0.7" stroke-dasharray="1 1"/>
<line x1="453.51" y1="275.4" x2="839.6" y2="413.15" stroke="#b0b0b0" stroke-width="0.7" stroke-dasharray="1 1"/>
<line x1="350.87" y1="139.28" x2="350.87" y2="212.04" stroke="#769876" stroke-width="4.4" stroke-dasharray="1 1.200" opacity="1"/>
<line x1="399.75" y1="156.71" x2="399.75" y2="229.47" stroke="#769876" stroke-width="4.4" stroke-dasharray="1 1.200" opacity="1"/>
<line x1="448.62" y1="174.15" x2="448.62" y2="246.91" stroke="#769876" stroke-width="4.4" stroke-dasharray="1 1.200" opacity="1"/>
<line x1="497.49" y1="191.59" x2="497.49" y2="296.45" stroke="#769876" stroke-width="4.4" stroke-dasharray="1 1.200" opacity="1"/>
<line x1="546.36" y1="209.02" x2="546.36" y2="313.88" stroke="#769876" stroke-width="4.4" stroke-dasharray="1 1.200" opacity="1"/>
<line x1="595.24" y1="226.46" x2="595.24" y2="331.32" stroke="#769876" stroke-width="4.4" stroke-dasharray="1 1.200" opacity="1"/>
<line x1="644.11" y1="243.89" x2="644.11" y2="348.75" stroke="#769876" stroke-width="4.4" stroke-dasharray="1 1.200" opacity="1"/>
<line x1="692.98" y1="261.33" x2="692.98" y2="366.19" stroke="#769876" stroke-width="4.4" stroke-dasharray="1 1.200" opacity="1"/>
<line x1="741.85" y1="278.77" x2="741.85" y2="383.63" stroke="#769876" stroke-width="4.4" stroke-dasharray="1 1.200" opacity="1"/>
<line x1="790.73" y1="296.2" x2="790.73" y2="401.06" stroke="#769876" stroke-width="4.4" stroke-dasharray="1 1.200" opacity="1"/>
<line x1="839.6" y1="313.64" x2="839.6" y2="418.5" stroke="#769876" stroke-width="4.4" stroke-dasharray="1 1.200" opacity="1"/>
<line x1="302.0" y1="121.84" x2="302.0" y2="189.25" stroke="#7d9c7d" stroke-width="3" stroke-dasharray="1 1.100" opacity="1"/>
<line x1="143.93" y1="246.19" x2="301.37" y2="120.21" stroke="#7a9f7a" stroke-width="4.4" stroke-dasharray="1 1.300" opacity="1"/>
<line x1="192.32" y1="263.6" x2="350.24" y2="137.64" stroke="#7a9f7a" stroke-width="4.4" stroke-dasharray="1 1.300" opacity="1"/>
<line x1="240.7" y1="281.01" x2="399.11" y2="155.08" stroke="#7a9f7a" stroke-width="4.4" stroke-dasharray="1 1.300" opacity="1"/>
<line x1="289.09" y1="298.42" x2="447.98" y2="172.52" stroke="#7a9f7a" stroke-width="4.4" stroke-dasharray="1 1.300" opacity="1"/>
<line x1="337.47" y1="315.83" x2="496.85" y2="189.95" stroke="#7a9f7a" stroke-width="4.4" stroke-dasharray="1 1.300" opacity="1"/>
<line x1="385.85" y1="333.24" x2="545.72" y2="207.39" stroke="#7a9f7a" stroke-width="4.4" stroke-dasharray="1 1.300" opacity="1"/>
<line x1="434.24" y1="350.65" x2="594.59" y2="224.83" stroke="#7a9f7a" stroke-width="4.4" stroke-dasharray="1 1.300" opacity="1"/>
<line x1="482.62" y1="368.06" x2="643.46" y2="242.26" stroke="#7a9f7a" stroke-width="4.4" stroke-dasharray="1 1.300" opacity="1"/>
<line x1="531.01" y1="385.47" x2="692.33" y2="259.7" stroke="#7a9f7a" stroke-width="4.4" stroke-dasharray="1 1.300" opacity="1"/>
<line x1="579.39" y1="402.87" x2="741.2" y2="277.13" stroke="#7a9f7a" stroke-width="4.4" stroke-dasharray="1 1.300" opacity="1"/>
<line x1="627.77" y1="420.28" x2="790.07" y2="294.57" stroke="#7a9f7a" stroke-width="4.4" stroke-dasharray="1 1.300" opacity="1"/>
<line x1="676.16" y1="437.69" x2="838.94" y2="312.01" stroke="#7a9f7a" stroke-width="4.4" stroke-dasharray="1 1.300" opacity="1"/>
<line x1="350.87" y1="162.82" x2="839.6" y2="337.18" stroke="#8a8a8a" stroke-width="0.8" stroke-dasharray="2 1.500"/>
<line x1="350.87" y1="193.85" x2="839.6" y2="368.21" stroke="#8a8a8a" stroke-width="0.8" stroke-dasharray="2 1.500"/>
<line x1="206.78" y1="195.9" x2="741.14" y2="387.52" stroke="#999" stroke-width="0.8" stroke-dasharray="1.500 1.500"/>
<line x1="270.26" y1="145.1" x2="806.78" y2="336.84" stroke="#999" stroke-width="0.8" stroke-dasharray="1.500 1.500"/>
<line x1="172.5" y1="223" x2="172.5" y2="258" stroke="#909090" stroke-width="0.8" stroke-dasharray="1 2"/>
<line x1="204.5" y1="198" x2="204.5" y2="269" stroke="#909090" stroke-width="0.8" stroke-dasharray="1 2"/>
<line x1="237.5" y1="171" x2="237.5" y2="281" stroke="#909090" stroke-width="0.8" stroke-dasharray="1 2"/>
<line x1="270" y1="145" x2="270" y2="255" stroke="#909090" stroke-width="0.8" stroke-dasharray="1 2"/>
<line x1="322" y1="127" x2="322" y2="212" stroke="#909090" stroke-width="0.8" stroke-dasharray="1 2"/>
<line x1="327.5" y1="131" x2="327.5" y2="212" stroke="#909090" stroke-width="0.8" stroke-dasharray="1 2"/>
<line x1="240.06" y1="281.52" x2="368.53" y2="235.47" stroke="#8a8a8a" stroke-width="0.8" stroke-dasharray="1.200 2.200"/><line x1="319.9" y1="218.05" x2="288.45" y2="298.93" stroke="#8a8a8a" stroke-width="0.8" stroke-dasharray="1.200 2.200"/>
<line x1="319.9" y1="218.05" x2="448.62" y2="172.01" stroke="#8a8a8a" stroke-width="0.8" stroke-dasharray="1.200 2.200"/><line x1="399.75" y1="154.57" x2="368.53" y2="235.47" stroke="#8a8a8a" stroke-width="0.8" stroke-dasharray="1.200 2.200"/>
<line x1="433.59" y1="351.15" x2="563.04" y2="305.16" stroke="#8a8a8a" stroke-width="0.8" stroke-dasharray="1.200 2.200"/><line x1="514.41" y1="287.74" x2="481.97" y2="368.56" stroke="#8a8a8a" stroke-width="0.8" stroke-dasharray="1.200 2.200"/>
<line x1="514.41" y1="287.74" x2="644.11" y2="241.75" stroke="#8a8a8a" stroke-width="0.8" stroke-dasharray="1.200 2.200"/><line x1="595.24" y1="224.32" x2="563.04" y2="305.16" stroke="#8a8a8a" stroke-width="0.8" stroke-dasharray="1.200 2.200"/>
<line x1="578.74" y1="403.38" x2="708.92" y2="357.43" stroke="#8a8a8a" stroke-width="0.8" stroke-dasharray="1.200 2.200"/><line x1="660.3" y1="340.0" x2="627.12" y2="420.79" stroke="#8a8a8a" stroke-width="0.8" stroke-dasharray="1.200 2.200"/>
<line x1="660.3" y1="340.0" x2="790.73" y2="294.06" stroke="#8a8a8a" stroke-width="0.8" stroke-dasharray="1.200 2.200"/><line x1="741.85" y1="276.63" x2="708.92" y2="357.43" stroke="#8a8a8a" stroke-width="0.8" stroke-dasharray="1.200 2.200"/>
<line x1="399.75" y1="261.57" x2="448.62" y2="228.72" stroke="#8a8a8a" stroke-width="0.8" stroke-dasharray="1.200 2.200"/><line x1="399.75" y1="211.28" x2="448.62" y2="279.01" stroke="#8a8a8a" stroke-width="0.8" stroke-dasharray="1.200 2.200"/>
<line x1="399.75" y1="211.28" x2="448.62" y2="174.15" stroke="#8a8a8a" stroke-width="0.8" stroke-dasharray="1.200 2.200"/><line x1="399.75" y1="156.71" x2="448.62" y2="228.72" stroke="#8a8a8a" stroke-width="0.8" stroke-dasharray="1.200 2.200"/>
<line x1="595.24" y1="331.32" x2="644.11" y2="298.46" stroke="#8a8a8a" stroke-width="0.8" stroke-dasharray="1.200 2.200"/><line x1="595.24" y1="281.03" x2="644.11" y2="348.75" stroke="#8a8a8a" stroke-width="0.8" stroke-dasharray="1.200 2.200"/>
<line x1="595.24" y1="281.03" x2="644.11" y2="243.89" stroke="#8a8a8a" stroke-width="0.8" stroke-dasharray="1.200 2.200"/><line x1="595.24" y1="226.46" x2="644.11" y2="298.46" stroke="#8a8a8a" stroke-width="0.8" stroke-dasharray="1.200 2.200"/>
<line x1="741.85" y1="383.63" x2="790.73" y2="350.77" stroke="#8a8a8a" stroke-width="0.8" stroke-dasharray="1.200 2.200"/><line x1="741.85" y1="333.34" x2="790.73" y2="401.06" stroke="#8a8a8a" stroke-width="0.8" stroke-dasharray="1.200 2.200"/>
<line x1="741.85" y1="333.34" x2="790.73" y2="296.2" stroke="#8a8a8a" stroke-width="0.8" stroke-dasharray="1.200 2.200"/><line x1="741.85" y1="278.77" x2="790.73" y2="350.77" stroke="#8a8a8a" stroke-width="0.8" stroke-dasharray="1.200 2.200"/>
</g>
<polygon points="143.3,246.7 675.5,438.2 839.6,311.5 302.0,119.7" fill="none" stroke="#555" stroke-width="0.9" stroke-dasharray="1.500 1.200"/>
<line x1="302.0" y1="119.2" x2="302.0" y2="112.7" stroke="#222" stroke-width="1.8"/>
<line x1="350.87" y1="136.64" x2="350.87" y2="130.14" stroke="#222" stroke-width="1.8"/>
<line x1="399.75" y1="154.07" x2="399.75" y2="147.57" stroke="#222" stroke-width="1.8"/>
<line x1="448.62" y1="171.51" x2="448.62" y2="165.01" stroke="#222" stroke-width="1.8"/>
<line x1="497.49" y1="188.95" x2="497.49" y2="182.45" stroke="#222" stroke-width="1.8"/>
<line x1="546.36" y1="206.38" x2="546.36" y2="199.88" stroke="#222" stroke-width="1.8"/>
<line x1="595.24" y1="223.82" x2="595.24" y2="217.32" stroke="#222" stroke-width="1.8"/>
<line x1="644.11" y1="241.25" x2="644.11" y2="234.75" stroke="#222" stroke-width="1.8"/>
<line x1="692.98" y1="258.69" x2="692.98" y2="252.19" stroke="#222" stroke-width="1.8"/>
<line x1="741.85" y1="276.13" x2="741.85" y2="269.63" stroke="#222" stroke-width="1.8"/>
<line x1="790.73" y1="293.56" x2="790.73" y2="287.06" stroke="#222" stroke-width="1.8"/>
<line x1="839.6" y1="311.0" x2="839.6" y2="304.5" stroke="#222" stroke-width="1.8"/>
<path d="M141.8 247.7 l3 0 l-1.500 3 z" stroke="#2a4a2a" stroke-width="0.5" fill="#3a5a3a"/>
<path d="M190.18 265.11 l3 0 l-1.500 3 z" stroke="#2a4a2a" stroke-width="0.5" fill="#3a5a3a"/>
<path d="M238.56 282.52 l3 0 l-1.500 3 z" stroke="#2a4a2a" stroke-width="0.5" fill="#3a5a3a"/>
<path d="M286.95 299.93 l3 0 l-1.500 3 z" stroke="#2a4a2a" stroke-width="0.5" fill="#3a5a3a"/>
<line x1="675.5" y1="494.91" x2="839.6" y2="368.21" stroke="#2a2a2a" stroke-width="1.3"/>
<line x1="675.5" y1="463.88" x2="773.96" y2="387.86" stroke="#555" stroke-width="0.7" stroke-dasharray="4 3"/>
<line x1="773.96" y1="391.61" x2="839.6" y2="340.93" stroke="#1d4f1d" stroke-width="1.8"/>
<line x1="773.96" y1="391.61" x2="839.6" y2="340.93" stroke="#3a9a3a" stroke-width="0.9"/>
<line x1="708.32" y1="519.86" x2="741.14" y2="444.23" stroke="#333" stroke-width="0.8"/>
<line x1="708.32" y1="469.57" x2="741.14" y2="494.52" stroke="#333" stroke-width="0.8"/>
<line x1="708.32" y1="469.57" x2="741.14" y2="390.73" stroke="#333" stroke-width="0.8"/>
<line x1="708.32" y1="416.07" x2="741.14" y2="444.23" stroke="#333" stroke-width="0.8"/>
<line x1="773.96" y1="469.18" x2="806.78" y2="393.55" stroke="#333" stroke-width="0.8"/>
<line x1="773.96" y1="418.89" x2="806.78" y2="443.84" stroke="#333" stroke-width="0.8"/>
<line x1="773.96" y1="418.89" x2="806.78" y2="340.05" stroke="#333" stroke-width="0.8"/>
<line x1="773.96" y1="365.39" x2="806.78" y2="393.55" stroke="#333" stroke-width="0.8"/>
<line x1="336.83" y1="345.76" x2="675.5" y2="467.62" stroke="#1d4f1d" stroke-width="2.2"/>
<line x1="336.83" y1="345.76" x2="675.5" y2="467.62" stroke="#4aa84a" stroke-width="1.1"/>
<line x1="433.59" y1="445.31" x2="481.97" y2="425.27" stroke="#333" stroke-width="0.8"/>
<line x1="433.59" y1="407.86" x2="481.97" y2="462.72" stroke="#333" stroke-width="0.8"/>
<line x1="433.59" y1="407.86" x2="481.97" y2="371.77" stroke="#333" stroke-width="0.8"/>
<line x1="433.59" y1="354.36" x2="481.97" y2="425.27" stroke="#333" stroke-width="0.8"/>
<line x1="433.59" y1="407.86" x2="481.97" y2="425.27" stroke="#333" stroke-width="0.8"/>
<line x1="481.97" y1="462.72" x2="530.35" y2="442.68" stroke="#333" stroke-width="0.8"/>
<line x1="481.97" y1="425.27" x2="530.35" y2="480.13" stroke="#333" stroke-width="0.8"/>
<line x1="481.97" y1="425.27" x2="530.35" y2="389.18" stroke="#333" stroke-width="0.8"/>
<line x1="481.97" y1="371.77" x2="530.35" y2="442.68" stroke="#333" stroke-width="0.8"/>
<line x1="481.97" y1="425.27" x2="530.35" y2="442.68" stroke="#333" stroke-width="0.8"/>
<line x1="336.83" y1="320.94" x2="675.5" y2="442.8" stroke="#1d4f1d" stroke-width="1.8"/>
<line x1="336.83" y1="320.94" x2="675.5" y2="442.8" stroke="#3a9a3a" stroke-width="0.9"/>
<line x1="675.5" y1="442.8" x2="839.6" y2="316.1" stroke="#1d4f1d" stroke-width="1.8"/>
<line x1="675.5" y1="442.8" x2="839.6" y2="316.1" stroke="#3a9a3a" stroke-width="0.9"/>
<line x1="336.83" y1="345.76" x2="307.91" y2="398.56" stroke="#3a3a3a" stroke-width="0.9"/>
<line x1="385.21" y1="363.17" x2="356.2" y2="415.97" stroke="#3a3a3a" stroke-width="0.9"/>
<line x1="433.59" y1="380.58" x2="404.49" y2="433.37" stroke="#3a3a3a" stroke-width="0.9"/>
<line x1="481.97" y1="397.99" x2="452.79" y2="450.77" stroke="#3a3a3a" stroke-width="0.9"/>
<line x1="530.35" y1="415.4" x2="501.08" y2="468.18" stroke="#3a3a3a" stroke-width="0.9"/>
<line x1="578.74" y1="432.81" x2="549.38" y2="485.58" stroke="#3a3a3a" stroke-width="0.9"/>
<line x1="627.12" y1="450.22" x2="597.67" y2="502.99" stroke="#3a3a3a" stroke-width="0.9"/>
<line x1="675.5" y1="467.62" x2="645.96" y2="520.39" stroke="#3a3a3a" stroke-width="0.9"/>
<line x1="708.32" y1="519.86" x2="708.32" y2="417.68" stroke="#2f8f2f" stroke-width="3.6"/><line x1="708.32" y1="519.86" x2="708.32" y2="417.68" stroke="#1d4f1d" stroke-width="1.08"/>
<line x1="741.14" y1="494.52" x2="741.14" y2="392.33" stroke="#2f8f2f" stroke-width="3.6"/><line x1="741.14" y1="494.52" x2="741.14" y2="392.33" stroke="#1d4f1d" stroke-width="1.08"/>
<line x1="773.96" y1="469.18" x2="773.96" y2="367.0" stroke="#2f8f2f" stroke-width="3.6"/><line x1="773.96" y1="469.18" x2="773.96" y2="367.0" stroke="#1d4f1d" stroke-width="1.08"/>
<line x1="806.78" y1="443.84" x2="806.78" y2="341.65" stroke="#2f8f2f" stroke-width="3.6"/><line x1="806.78" y1="443.84" x2="806.78" y2="341.65" stroke="#1d4f1d" stroke-width="1.08"/>
<line x1="839.6" y1="418.5" x2="839.6" y2="316.31" stroke="#2f8f2f" stroke-width="3.6"/><line x1="839.6" y1="418.5" x2="839.6" y2="316.31" stroke="#1d4f1d" stroke-width="1.08"/>
<line x1="336.83" y1="423.34" x2="336.83" y2="321.15" stroke="#2f8f2f" stroke-width="5.4"/><line x1="336.83" y1="423.34" x2="336.83" y2="321.15" stroke="#1d4f1d" stroke-width="1.62"/>
<line x1="385.21" y1="440.75" x2="385.21" y2="338.56" stroke="#2f8f2f" stroke-width="5.4"/><line x1="385.21" y1="440.75" x2="385.21" y2="338.56" stroke="#1d4f1d" stroke-width="1.62"/>
<line x1="433.59" y1="458.15" x2="433.59" y2="355.97" stroke="#2f8f2f" stroke-width="5.4"/><line x1="433.59" y1="458.15" x2="433.59" y2="355.97" stroke="#1d4f1d" stroke-width="1.62"/>
<line x1="481.97" y1="475.56" x2="481.97" y2="373.38" stroke="#2f8f2f" stroke-width="5.4"/><line x1="481.97" y1="475.56" x2="481.97" y2="373.38" stroke="#1d4f1d" stroke-width="1.62"/>
<line x1="530.35" y1="492.97" x2="530.35" y2="390.79" stroke="#2f8f2f" stroke-width="5.4"/><line x1="530.35" y1="492.97" x2="530.35" y2="390.79" stroke="#1d4f1d" stroke-width="1.62"/>
<line x1="578.74" y1="510.38" x2="578.74" y2="408.2" stroke="#2f8f2f" stroke-width="5.4"/><line x1="578.74" y1="510.38" x2="578.74" y2="408.2" stroke="#1d4f1d" stroke-width="1.62"/>
<line x1="627.12" y1="527.79" x2="627.12" y2="425.61" stroke="#2f8f2f" stroke-width="5.4"/><line x1="627.12" y1="527.79" x2="627.12" y2="425.61" stroke="#1d4f1d" stroke-width="1.62"/>
<line x1="675.5" y1="545.2" x2="675.5" y2="443.01" stroke="#2f8f2f" stroke-width="3.4"/><line x1="675.5" y1="545.2" x2="675.5" y2="443.01" stroke="#1d4f1d" stroke-width="1.02"/>
<line x1="336.83" y1="319.34" x2="336.83" y2="311.34" stroke="#333" stroke-width="1.3"/>
<line x1="385.21" y1="336.75" x2="385.21" y2="328.75" stroke="#333" stroke-width="1.3"/>
<line x1="433.59" y1="354.15" x2="433.59" y2="346.15" stroke="#333" stroke-width="1.3"/>
<line x1="481.97" y1="371.56" x2="481.97" y2="363.56" stroke="#333" stroke-width="1.3"/>
<line x1="530.35" y1="388.97" x2="530.35" y2="380.97" stroke="#333" stroke-width="1.3"/>
<line x1="578.74" y1="406.38" x2="578.74" y2="398.38" stroke="#333" stroke-width="1.3"/>
<line x1="627.12" y1="423.79" x2="627.12" y2="415.79" stroke="#333" stroke-width="1.3"/>
<line x1="675.5" y1="441.2" x2="675.5" y2="433.2" stroke="#333" stroke-width="1.3"/>
<line x1="708.32" y1="414.86" x2="708.32" y2="407.86" stroke="#333" stroke-width="1.3"/>
<line x1="741.14" y1="389.52" x2="741.14" y2="382.52" stroke="#333" stroke-width="1.3"/>
<line x1="773.96" y1="364.18" x2="773.96" y2="357.18" stroke="#333" stroke-width="1.3"/>
<line x1="806.78" y1="338.84" x2="806.78" y2="331.84" stroke="#333" stroke-width="1.3"/>
<line x1="839.6" y1="313.5" x2="839.6" y2="306.5" stroke="#333" stroke-width="1.3"/>
<line x1="336.83" y1="377.11" x2="675.5" y2="496.19" stroke="#34346e" stroke-width="2.3"/>
<line x1="327.19" y1="384.73" x2="665.65" y2="503.8" stroke="#34346e" stroke-width="2.3"/>
<line x1="317.55" y1="392.34" x2="655.81" y2="511.4" stroke="#34346e" stroke-width="2.3"/>
<line x1="307.91" y1="399.95" x2="645.96" y2="519.0" stroke="#34346e" stroke-width="2.3"/>
<line x1="336.83" y1="377.11" x2="307.91" y2="399.95" stroke="#555" stroke-width="1.8"/>
<line x1="385.21" y1="394.12" x2="356.2" y2="416.96" stroke="#555" stroke-width="1.8"/>
<line x1="433.59" y1="411.14" x2="404.49" y2="433.97" stroke="#555" stroke-width="1.8"/>
<line x1="481.97" y1="428.15" x2="452.79" y2="450.97" stroke="#555" stroke-width="1.8"/>
<line x1="530.35" y1="445.16" x2="501.08" y2="467.98" stroke="#555" stroke-width="1.8"/>
<line x1="578.74" y1="462.17" x2="549.38" y2="484.99" stroke="#555" stroke-width="1.8"/>
<line x1="627.12" y1="479.18" x2="597.67" y2="501.99" stroke="#555" stroke-width="1.8"/>
<line x1="675.5" y1="496.19" x2="645.96" y2="519.0" stroke="#555" stroke-width="1.8"/>
<line x1="348.34" y1="348.98" x2="354.34" y2="351.18" stroke="#1a3a1a" stroke-width="0.7"/>
<line x1="367.69" y1="355.95" x2="373.69" y2="358.15" stroke="#1a3a1a" stroke-width="0.7"/>
<line x1="396.72" y1="366.39" x2="402.72" y2="368.59" stroke="#1a3a1a" stroke-width="0.7"/>
<line x1="416.08" y1="373.36" x2="422.08" y2="375.56" stroke="#1a3a1a" stroke-width="0.7"/>
<line x1="445.11" y1="383.8" x2="451.11" y2="386.0" stroke="#1a3a1a" stroke-width="0.7"/>
<line x1="464.46" y1="390.77" x2="470.46" y2="392.96999999999997" stroke="#1a3a1a" stroke-width="0.7"/>
<line x1="493.49" y1="401.21" x2="499.49" y2="403.40999999999997" stroke="#1a3a1a" stroke-width="0.7"/>
<line x1="512.84" y1="408.18" x2="518.84" y2="410.38" stroke="#1a3a1a" stroke-width="0.7"/>
<line x1="541.87" y1="418.62" x2="547.87" y2="420.82" stroke="#1a3a1a" stroke-width="0.7"/>
<line x1="561.22" y1="425.58" x2="567.22" y2="427.78" stroke="#1a3a1a" stroke-width="0.7"/>
<line x1="590.25" y1="436.03" x2="596.25" y2="438.22999999999996" stroke="#1a3a1a" stroke-width="0.7"/>
<line x1="609.6" y1="442.99" x2="615.6" y2="445.19" stroke="#1a3a1a" stroke-width="0.7"/>
<line x1="638.63" y1="453.44" x2="644.63" y2="455.64" stroke="#1a3a1a" stroke-width="0.7"/>
<line x1="657.99" y1="460.4" x2="663.99" y2="462.59999999999997" stroke="#1a3a1a" stroke-width="0.7"/>
<rect x="137" y="330" width="3.200" height="23" fill="#1010f0"/>
<path d="M139 355 l22 7 M158 358.500 l4 3.800 l-5.500 0.500" stroke="#e02020" stroke-width="1.1" fill="none"/>
<path d="M165 369 l10 -4 M167 363 l6 9" stroke="#e02020" stroke-width="1.3" fill="none"/>
<path d="M141 351 l12 -9" stroke="#20d020" stroke-width="1" fill="none"/>
<path d="M147 342 l8 -3 l3 3 M143 347 l11 -6 l3 4" stroke="#20c020" stroke-width="1.1" fill="none"/>
<path d="M153 331 l7 3 l4 -5 M160 334 l7 2" stroke="#20e020" stroke-width="1.2" fill="none"/>
<path d="M154 360 l9 -5 M156 362 l9 -5" stroke="#666" stroke-width="0.8" fill="none"/>
<path d="M139.700 549 V566.300" stroke="#2a2fb4" stroke-width="1.1" fill="none"/><path d="M139.700 566.300 l11 -10" stroke="#30b040" stroke-width="1.1" fill="none"/><path d="M139.700 566.300 l17.800 6.700" stroke="#d02020" stroke-width="1.1" fill="none"/>
<text x="141.500" y="555" font-family="Liberation Sans, sans-serif" font-size="5.500" font-weight="bold" fill="#2a2fb4">Z</text>
<text x="153" y="562.500" font-family="Liberation Sans, sans-serif" font-size="5.500" font-weight="bold" fill="#30b040">Y</text>
<text x="159" y="579.500" font-family="Liberation Sans, sans-serif" font-size="5.500" font-weight="bold" fill="#d02020">X</text>
</svg>
<div class="abs" style="left:111px;top:76px;width:71px;height:106px;background:#ece9d8;border:1px solid #fff;border-right-color:#aca899;border-bottom-color:#aca899;box-sizing:border-box"></div>
<div class="abs" style="left:112px;top:77px;width:68px;height:13.500px;background:#0a50d8"></div>
<div class="t" style="left:113.500px;top:78px;height:12px;line-height:12px;font-size:9px;font-weight:bold;color:#fff;letter-spacing:-0.100px">Ansicht</div>
<svg class="abs" style="left:152px;top:77px" width="28" height="14" viewBox="0 0 28 14"><path d="M3 5.500 h7.500 l-3.750 4 z" fill="#fff"/><path d="M18 3.500 l6 6.500 M24 3.500 l-6 6.500" stroke="#fff" stroke-width="1.500"/></svg>
<svg class="abs" style="left:112px;top:91px" width="70" height="90" viewBox="112 91 70 90">
<path d="M117 100 l3.500 -2 l4 1.500 l-3.500 2.200 z" stroke="#0a6a6a" stroke-width="0.6" fill="#28c4b0"/><path d="M117 100 v3 l4 1.800 v-3 z" stroke="#0a5a5a" stroke-width="0.6" fill="#1a9a90"/><path d="M121 101.7 l3.500 -2.200 v3 l-3.500 2.200 z" stroke="#0a5a5a" stroke-width="0.6" fill="#0f7a78"/><path d="M121.5 95.5 v3.500" stroke="#c0202a" stroke-width="1" fill="none"/><path d="M120 98 l1.500 2 l1.500 -2" stroke="#1c2fb4" stroke-width="0.9" fill="none"/>
<path d="M133 100 l3.500 -2 l4 1.500 l-3.500 2.200 z" stroke="#0a6a6a" stroke-width="0.6" fill="#28c4b0"/><path d="M133 100 v3 l4 1.800 v-3 z" stroke="#0a5a5a" stroke-width="0.6" fill="#1a9a90"/><path d="M137 101.7 l3.500 -2.200 v3 l-3.500 2.200 z" stroke="#0a5a5a" stroke-width="0.6" fill="#0f7a78"/><path d="M137.5 95.5 v3.500" stroke="#c0202a" stroke-width="1" fill="none"/><path d="M136 98 l1.500 2 l1.500 -2" stroke="#1c2fb4" stroke-width="0.9" fill="none"/>
<path d="M149.5 100 l3.500 -2 l4 1.500 l-3.500 2.200 z" stroke="#0a6a6a" stroke-width="0.6" fill="#28c4b0"/><path d="M149.5 100 v3 l4 1.800 v-3 z" stroke="#0a5a5a" stroke-width="0.6" fill="#1a9a90"/><path d="M153.5 101.7 l3.500 -2.200 v3 l-3.500 2.200 z" stroke="#0a5a5a" stroke-width="0.6" fill="#0f7a78"/><path d="M154.0 95.5 v3.500" stroke="#c0202a" stroke-width="1" fill="none"/><path d="M152.5 98 l1.500 2 l1.500 -2" stroke="#1c2fb4" stroke-width="0.9" fill="none"/>
<path d="M166.5 100 l3.500 -2 l4 1.500 l-3.500 2.200 z" stroke="#0a6a6a" stroke-width="0.6" fill="#28c4b0"/><path d="M166.5 100 v3 l4 1.800 v-3 z" stroke="#0a5a5a" stroke-width="0.6" fill="#1a9a90"/><path d="M170.5 101.7 l3.500 -2.200 v3 l-3.500 2.200 z" stroke="#0a5a5a" stroke-width="0.6" fill="#0f7a78"/><path d="M171.0 95.5 v3.500" stroke="#c0202a" stroke-width="1" fill="none"/><path d="M169.5 98 l1.500 2 l1.500 -2" stroke="#1c2fb4" stroke-width="0.9" fill="none"/>
<g transform="translate(0 8)">
<path d="M119 105 v9" stroke="#1c2fb4" stroke-width="2" fill="none"/><path d="M119 114 h8 M124.500 112 l2.500 2 l-2.500 2" stroke="#e02020" stroke-width="1.3" fill="none"/><path d="M117.500 107 l1.500 -2.500 l1.500 2.500" stroke="#1c2fb4" stroke-width="0.9" fill="none"/>
<circle cx="137.5" cy="107.5" r="3.800" fill="#fff" stroke="#111" stroke-width="1.300"/><path d="M140.2 110.2 l4 4.500" stroke="#111" stroke-width="2" fill="none"/><path d="M133 113.500 h3 M134.500 112 v3" stroke="#1c2fb4" stroke-width="0.9" fill="none"/>
<circle cx="153.5" cy="107.5" r="3.800" fill="#fff" stroke="#111" stroke-width="1.300"/><path d="M156.2 110.2 l4 4.500" stroke="#111" stroke-width="2" fill="none"/><path d="M151.500 107.500 h4" stroke="#1c2fb4" stroke-width="1" fill="none"/>
<circle cx="170" cy="107.5" r="3.800" fill="#fff" stroke="#111" stroke-width="1.300"/><path d="M172.7 110.2 l4 4.500" stroke="#111" stroke-width="2" fill="none"/><path d="M165.500 108 v5 h5" stroke="#111" stroke-width="0.9" fill="none" stroke-dasharray="1 1"/>
</g>
<g transform="translate(0 9)">
<circle cx="121.5" cy="125.5" r="3.800" fill="#fff" stroke="#111" stroke-width="1.300"/><path d="M124.2 128.2 l4 4.500" stroke="#111" stroke-width="2" fill="none"/><path d="M117 132 h6 M117 132 l1.300 -1.200 M123 132 l-1.300 -1.200" stroke="#111" stroke-width="0.8" fill="none"/>
<circle cx="137.5" cy="125.5" r="3.800" fill="#fff" stroke="#c4c1b0" stroke-width="1.300"/><path d="M140.2 128.2 l4 4.500" stroke="#c4c1b0" stroke-width="2" fill="none"/><path d="M135 130 v5 M138 131 v4" stroke="#c4c1b0" stroke-width="1" fill="none"/>
<path d="M150.500 128 l2 -2.500 h7 l-1 2.500 z" stroke="#222" stroke-width="0.8" fill="#e8d820"/><rect x="150.5" y="128" width="8" height="6.5" fill="#e8d820" stroke="#222" stroke-width="0.8"/><path d="M152 124 l2 -2 M156 123.500 l1.500 -2" stroke="#1c2fb4" stroke-width="1.1" fill="none"/>
<circle cx="170.5" cy="124.5" r="3" fill="#f4e020" stroke="#555" stroke-width="0.8"/><rect x="169" y="128" width="3" height="3.5" fill="#2a3fb4"/>
</g>
<path d="M113.500 144 h66" stroke="#c5c2b2" stroke-width="1" fill="none"/><path d="M113.500 145 h66" stroke="#fff" stroke-width="1" fill="none"/>
<g transform="translate(0 0.5)">
<rect x="116.5" y="150.5" width="9" height="6.5" fill="#c03030" stroke="#1a1f8a" stroke-width="1.1"/><rect x="118" y="148.5" width="6" height="2" fill="#1a1f8a"/><path d="M123 149 q4 -3 4 3" stroke="#1c2fb4" stroke-width="1.1" fill="none"/><path d="M118 153 h6 M118 155 h6" stroke="#fff" stroke-width="0.7" fill="none"/>
<rect x="133.5" y="150.5" width="9" height="6.5" fill="#dcd9c8" stroke="#bdbaa8" stroke-width="1.1"/><rect x="135" y="148.5" width="6" height="2" fill="#c4c1b0"/><path d="M140 149 q4 -3 4 3" stroke="#c4c1b0" stroke-width="1.1" fill="none"/>
<path d="M149.500 146 v14" stroke="#c5c2b2" stroke-width="1" fill="none"/>
<rect x="155.5" y="148" width="10" height="10" fill="#e8d820" stroke="#111" stroke-width="1.2"/><path d="M158 151 h5 v4.500 h-5 z" stroke="#111" stroke-width="1.1" fill="#ece9d8"/><rect x="162" y="152.5" width="4" height="1.8" fill="#ece9d8"/>
</g>
<g transform="translate(0 1.5)">
<path d="M116.500 169 l2 -2.500 h8 l-2 2.500 z" stroke="#1a1f8a" stroke-width="0.9" fill="#4a5ae0"/><rect x="116.5" y="169" width="8" height="6" fill="#fff" stroke="#1a1f8a" stroke-width="1.1"/><path d="M124.500 169 l2 -2.500 v6 l-2 2.500" stroke="#1a1f8a" stroke-width="0.9" fill="#2a3fb4"/><path d="M118.500 174 l4 -4.500" stroke="#111" stroke-width="1.2" fill="none"/>
</g>
</svg>
<div class="abs" style="left:886px;top:75px;width:1px;height:610px;background:#fbfaf4"></div>
<div class="hdr" style="left:890px;top:75px;width:70px;"><span style="position:absolute;left:2.500px;top:0">Eigensc…</span></div>
<svg class="abs" style="left:933px;top:75px" width="27" height="13" viewBox="0 0 27 13"><path d="M4.500 3 h3.500 v4 h-3.500 z M3.500 7.300 h5.500 M6.200 7.500 v3" stroke="#fff" stroke-width="1.1" fill="none"/><path d="M15.500 3.300 l5.500 6 M21 3.300 l-5.500 6" stroke="#fff" stroke-width="1.400" fill="none"/></svg>
<svg class="abs" style="left:888px;top:88px" width="72" height="36" viewBox="888 88 72 36">
<rect x="891.5" y="90.5" width="8.5" height="13" fill="#c4d2f6" stroke="#fff" stroke-width="1"/><path d="M893 97 l1.500 1.500 l1.500 -1.500" stroke="#1c2fb4" stroke-width="0.9" fill="none"/><path d="M896.500 93 v6" stroke="#334" stroke-width="0.8" fill="none"/>
<path d="M905 92 h7 l-3 4.500 v5 h-1.500 v-5 z" stroke="#111" stroke-width="1.1" fill="none"/><rect x="911" y="94.5" width="4.5" height="6.5" fill="#ece9d8" stroke="#111" stroke-width="1"/>
<path d="M922 92 h8 l-3.300 4.500 v5 h-1.500 v-5 z" stroke="#111" stroke-width="1.1" fill="none"/><circle cx="931.5" cy="98.5" r="1.9" fill="#f0e020"/>
<path d="M942 101 l1 -3.500 l4.500 -5.500 l1.800 1.500 l-4.500 5.500 z" stroke="#b0ad9c" stroke-width="0.9" fill="#dcd9c8"/>
<circle cx="927.5" cy="114.5" r="5" fill="#e8a0d8" stroke="#c8c8c8" stroke-width="0.8"/><path d="M927.500 114.500 v-5 a5 5 0 0 1 5 5 z" stroke="#999" stroke-width="0.3" fill="#88aaf0"/><path d="M927.500 114.500 h5 a5 5 0 0 1 -3.500 4.700 z" stroke="#999" stroke-width="0.3" fill="#e8e060"/><path d="M927.500 114.500 l-4.200 -2.700 a5 5 0 0 1 4.200 -2.300 z" stroke="#999" stroke-width="0.3" fill="#80e0d0"/>
<path d="M938 117 l4 -4 h5 l3 2 l-2 3 z" stroke="#9ab" stroke-width="0.5" fill="#88c8d0"/><path d="M941 113 l6 3" stroke="#c88" stroke-width="1.5" fill="none"/>
</svg>
<div class="abs" style="left:890px;top:123px;width:69px;height:562px;background:#fff;border:1px solid #55544c;border-right-color:#d4d0c8;border-bottom-color:#d4d0c8;box-sizing:border-box"></div>
<div class="abs" style="left:891px;top:124.2px;width:66px;height:11.92px;border-bottom:1px solid #d0d0d0;box-sizing:border-box"></div>
<div class="abs" style="left:891.500px;top:124.2px;width:53px;height:11px;background:#6a86d8;border:1px solid #2a3f8a;box-sizing:border-box"></div>
<div class="t" style="left:895px;top:125.5px;color:#e8eefc">Lizenzname</div>
<div class="t" style="left:948px;top:125.5px;color:#a8a8a0">D.</div>
<div class="abs" style="left:891px;top:136.12px;width:66px;height:11.92px;border-bottom:1px solid #d0d0d0;box-sizing:border-box"></div>
<div class="t" style="left:895px;top:137.42px;color:#000">Staatsnorm</div>
<div class="t" style="left:948px;top:137.42px;color:#a8a8a0">E.</div>
<div class="abs" style="left:891px;top:148.04px;width:66px;height:11.92px;border-bottom:1px solid #d0d0d0;box-sizing:border-box"></div>
<div class="t" style="left:895px;top:149.34px;color:#000">Struktur</div>
<div class="t" style="left:948px;top:149.34px;color:#a8a8a0">A.</div>
<div class="abs" style="left:891px;top:159.96px;width:66px;height:11.92px;border-bottom:1px solid #d0d0d0;box-sizing:border-box"></div>
<div class="t" style="left:895px;top:161.26px;color:#000">Niveau</div>
<div class="t" style="left:948px;top:161.26px;color:#a8a8a0">E.</div>
<div class="abs" style="left:891px;top:171.88px;width:66px;height:11.92px;border-bottom:1px solid #d0d0d0;box-sizing:border-box"></div>
<div class="t" style="left:895px;top:173.18px;color:#000">Anzahl Kno...</div>
<div class="t" style="left:948px;top:173.18px;color:#a8a8a0">6.</div>
<div class="abs" style="left:891px;top:183.8px;width:66px;height:11.92px;border-bottom:1px solid #d0d0d0;box-sizing:border-box"></div>
<div class="t" style="left:895px;top:185.1px;color:#000">Anzahl Stä...</div>
<div class="t" style="left:948px;top:185.1px;color:#a8a8a0">3.</div>
<div class="abs" style="left:891px;top:195.72px;width:66px;height:11.92px;border-bottom:1px solid #d0d0d0;box-sizing:border-box"></div>
<div class="t" style="left:895px;top:197.02px;color:#000">Anzahl 2D-...</div>
<div class="t" style="left:948px;top:197.02px;color:#a8a8a0">0</div>
<div class="abs" style="left:891px;top:207.64px;width:66px;height:11.92px;border-bottom:1px solid #d0d0d0;box-sizing:border-box"></div>
<div class="t" style="left:895px;top:208.94px;color:#000">Anzahl Kör...</div>
<div class="t" style="left:948px;top:208.94px;color:#a8a8a0">0</div>
<div class="abs" style="left:891px;top:219.56px;width:66px;height:11.92px;border-bottom:1px solid #d0d0d0;box-sizing:border-box"></div>
<div class="t" style="left:895px;top:220.86px;color:#000">Anzahl ver...</div>
<div class="t" style="left:948px;top:220.86px;color:#a8a8a0">3.</div>
<div class="abs" style="left:891px;top:231.48px;width:66px;height:11.92px;border-bottom:1px solid #d0d0d0;box-sizing:border-box"></div>
<div class="t" style="left:895px;top:232.78px;color:#000">Anzahl Las...</div>
<div class="t" style="left:948px;top:232.78px;color:#a8a8a0">1.</div>
<div class="abs" style="left:891px;top:243.4px;width:66px;height:11.92px;border-bottom:1px solid #d0d0d0;box-sizing:border-box"></div>
<div class="t" style="left:895px;top:244.7px;color:#000">Anzahl Mat...</div>
<div class="t" style="left:948px;top:244.7px;color:#a8a8a0">6</div>
<div class="abs" style="left:891px;top:255.32px;width:66px;height:11.92px;border-bottom:1px solid #d0d0d0;box-sizing:border-box"></div>
<div class="t" style="left:895px;top:256.62px;color:#000">Lineare An...</div>
<div class="t" style="left:948px;top:256.62px;color:#a8a8a0">F.</div>
<div class="abs" style="left:891px;top:267.24px;width:66px;height:11.92px;border-bottom:1px solid #d0d0d0;box-sizing:border-box"></div>
<div class="t" style="left:895px;top:268.54px;color:#000">Nichtlinear...</div>
<div class="t" style="left:948px;top:268.54px;color:#a8a8a0">F.</div>
<div class="abs" style="left:944.500px;top:124px;width:1px;height:155.0px;background:#d0d0d0"></div>
<div class="abs" style="left:109px;top:75px;width:1px;height:610px;background:#b4b1a0"></div>
<div class="abs" style="left:871px;top:76px;width:14px;height:522px;background:#f6f5ef;border-left:1px solid #e4e2d8;box-sizing:border-box"></div>
<div class="abs" style="left:872px;top:76px;width:13px;height:13px;background:linear-gradient(135deg,#dfe8fd,#b8caf6);border:1px solid #c4d2f8;border-radius:2px;box-sizing:border-box"><svg class="abs" style="left:-1px;top:-1px" width="13" height="12" viewBox="0 0 13 12"><path d="M3.500 7.500 l3 -3 l3 3" stroke="#3d57a8" stroke-width="1.800" fill="none"/></svg></div>
<div class="abs" style="left:872px;top:495px;width:13px;height:13px;background:linear-gradient(135deg,#dfe8fd,#b8caf6);border:1px solid #c4d2f8;border-radius:2px;box-sizing:border-box"><svg class="abs" style="left:-1px;top:-1px" width="13" height="12" viewBox="0 0 13 12"><path d="M3.500 4.500 l3 3 l3 -3" stroke="#3d57a8" stroke-width="1.800" fill="none"/></svg></div>
<div class="abs" style="left:872px;top:283px;width:13px;height:12px;background:linear-gradient(90deg,#d6e0fb,#bccdf6);border:1px solid #a9bdf0;border-radius:2px;box-sizing:border-box"></div>
<div class="abs" style="left:876px;top:287px;width:5px;height:5px;background:repeating-linear-gradient(#8fa6e6 0 1px,#eef 1px 2px)"></div>
<div class="abs" style="left:873px;top:510px;width:11px;height:86px;background:repeating-linear-gradient(#3a3a3a 0 1px,#5a5a5a 1px 2px);border:1px solid #222;outline:1px solid #9a988c;box-sizing:border-box"></div>
<div class="abs" style="left:732px;top:600px;width:66px;height:11px;background:repeating-linear-gradient(90deg,#3a3a3a 0 1px,#5a5a5a 1px 2px);border:1px solid #222;outline:1px solid #9a988c;box-sizing:border-box"></div>
<div class="abs" style="left:802px;top:600px;width:67px;height:11px;background:repeating-linear-gradient(90deg,#3a3a3a 0 1px,#5a5a5a 1px 2px);border:1px solid #222;outline:1px solid #9a988c;box-sizing:border-box"></div>
<div class="abs" style="left:110px;top:598px;width:211px;height:15px;background:#ece9d8"></div>
<div class="abs" style="left:321px;top:598px;width:410px;height:14px;background:#f6f5ef;border-top:1px solid #e4e2d8;box-sizing:border-box"></div>
<div class="abs" style="left:321px;top:599px;width:13px;height:13px;background:linear-gradient(135deg,#dfe8fd,#b8caf6);border:1px solid #c4d2f8;border-radius:2px;box-sizing:border-box"><svg class="abs" style="left:-1px;top:-1px" width="13" height="12" viewBox="0 0 13 12"><path d="M7.500 3 l-3 3 l3 3" stroke="#3d57a8" stroke-width="1.800" fill="none"/></svg></div>
<div class="abs" style="left:717px;top:599px;width:13px;height:13px;background:linear-gradient(135deg,#dfe8fd,#b8caf6);border:1px solid #c4d2f8;border-radius:2px;box-sizing:border-box"><svg class="abs" style="left:-1px;top:-1px" width="13" height="12" viewBox="0 0 13 12"><path d="M5 3 l3 3 l-3 3" stroke="#3d57a8" stroke-width="1.800" fill="none"/></svg></div>
<div class="abs" style="left:516px;top:599px;width:12px;height:13px;background:linear-gradient(#d6e0fb,#bccdf6);border:1px solid #a9bdf0;border-radius:2px;box-sizing:border-box"></div>
<div class="abs" style="left:519.500px;top:603px;width:5px;height:5px;background:repeating-linear-gradient(90deg,#8fa6e6 0 1px,#eef 1px 2px)"></div>
<svg class="abs" style="left:110px;top:597px" width="212" height="17" viewBox="110 597 212 17">
<rect x="112.5" y="598.5" width="14.5" height="13.5" fill="#ece9d8" stroke="#f8f7f0" stroke-width="0.8"/><path d="M112.5 612 h14.5 v-13.500" stroke="#c8c5b4" stroke-width="0.8" fill="none"/>
<rect x="129" y="598.5" width="14.5" height="13.5" fill="#fbfaf0" stroke="#aca899" stroke-width="0.8"/>
<rect x="148.5" y="598.5" width="14.5" height="13.5" fill="#ece9d8" stroke="#f8f7f0" stroke-width="0.8"/><path d="M148.5 612 h14.5 v-13.500" stroke="#c8c5b4" stroke-width="0.8" fill="none"/>
<rect x="163.5" y="598.5" width="14.5" height="13.5" fill="#ece9d8" stroke="#f8f7f0" stroke-width="0.8"/><path d="M163.5 612 h14.5 v-13.500" stroke="#c8c5b4" stroke-width="0.8" fill="none"/>
<rect x="180" y="598.5" width="14.5" height="13.5" fill="#ece9d8" stroke="#f8f7f0" stroke-width="0.8"/><path d="M180 612 h14.5 v-13.500" stroke="#c8c5b4" stroke-width="0.8" fill="none"/>
<rect x="198" y="598.5" width="14.5" height="13.5" fill="#ece9d8" stroke="#f8f7f0" stroke-width="0.8"/><path d="M198 612 h14.5 v-13.500" stroke="#c8c5b4" stroke-width="0.8" fill="none"/>
<rect x="215" y="598.5" width="14.5" height="13.5" fill="#ece9d8" stroke="#f8f7f0" stroke-width="0.8"/><path d="M215 612 h14.5 v-13.500" stroke="#c8c5b4" stroke-width="0.8" fill="none"/>
<rect x="233" y="598.5" width="14.5" height="13.5" fill="#ece9d8" stroke="#f8f7f0" stroke-width="0.8"/><path d="M233 612 h14.5 v-13.500" stroke="#c8c5b4" stroke-width="0.8" fill="none"/>
<rect x="251" y="598.5" width="14.5" height="13.5" fill="#ece9d8" stroke="#f8f7f0" stroke-width="0.8"/><path d="M251 612 h14.5 v-13.500" stroke="#c8c5b4" stroke-width="0.8" fill="none"/>
<rect x="270" y="598.5" width="14.5" height="13.5" fill="#ece9d8" stroke="#f8f7f0" stroke-width="0.8"/><path d="M270 612 h14.5 v-13.500" stroke="#c8c5b4" stroke-width="0.8" fill="none"/>
<rect x="287" y="598.5" width="14.5" height="13.5" fill="#ece9d8" stroke="#f8f7f0" stroke-width="0.8"/><path d="M287 612 h14.5 v-13.500" stroke="#c8c5b4" stroke-width="0.8" fill="none"/>
<rect x="304" y="598.5" width="14.5" height="13.5" fill="#ece9d8" stroke="#f8f7f0" stroke-width="0.8"/><path d="M304 612 h14.5 v-13.500" stroke="#c8c5b4" stroke-width="0.8" fill="none"/>
<path d="M115.5 608.500 l2 -5 h5 l-2 5 z" stroke="#111" stroke-width="1" fill="#ece9d8"/><path d="M122.5 603.500 l1.500 -1 v4.500 l-2 5" stroke="#111" stroke-width="0.9" fill="#ece9d8"/>
<path d="M132 608.500 l2 -5 h5 l-2 5 z" stroke="#111" stroke-width="1" fill="#e0d820"/><path d="M139 603.500 l1.500 -1 v4.500 l-2 5" stroke="#111" stroke-width="0.9" fill="#e0d820"/>
<path d="M151 609.500 h10 M152 609 l4 -5 l4 5 z" stroke="#1c2fb4" stroke-width="1" fill="#e0d820"/><circle cx="156" cy="602.5" r="1.2" fill="#111"/>
<path d="M167 601 v8 M165 609.500 h12" stroke="#1c2fb4" stroke-width="1.5" fill="none"/><rect x="170" y="606" width="2" height="3" fill="#d9d21c" stroke="#555" stroke-width="0.4"/><rect x="173" y="604.5" width="2.5" height="4.5" fill="#d9d21c" stroke="#555" stroke-width="0.4"/>
<path d="M183 601 v10" stroke="#1c2fb4" stroke-width="1.5" fill="none"/><path d="M184 602 h9 v3 h-9 M184 608.500 h6" stroke="#c0202a" stroke-width="1.1" fill="none"/>
<text x="200" y="605" font-family="Liberation Sans, sans-serif" font-size="5.500" font-weight="bold" fill="#222">ABC</text><path d="M200 608.500 h11" stroke="#1c2fb4" stroke-width="1.3" fill="none"/><circle cx="205.5" cy="608.5" r="1.3" fill="#111"/>
<text x="217" y="604.500" font-family="Liberation Sans, sans-serif" font-size="5.500" font-weight="bold" fill="#222">ABC</text><path d="M217 609 l2 -2.500 h8 l-2 2.500 z" stroke="#333" stroke-width="0.7" fill="#d9d21c"/>
<path d="M235 610 l5 -7 l5 7 z M237 607 h6 M240 603 v7" stroke="#c88" stroke-width="0.9" fill="none" stroke-dasharray="1 1"/><path d="M235 610 h10" stroke="#2a8a3a" stroke-width="1" fill="none" stroke-dasharray="1.500 1"/>
<path d="M254.500 601 v7" stroke="#111" stroke-width="1.8" fill="none"/><path d="M252.500 607 h4 l-2 3 z" stroke="#111" stroke-width="0.4" fill="#111"/><rect x="258.5" y="601" width="2.5" height="8" fill="#ccc" stroke="#111" stroke-width="0.8"/><rect x="262" y="601" width="2.5" height="8" fill="#ccc" stroke="#111" stroke-width="0.8"/>
<rect x="272.5" y="603.5" width="7" height="6.5" fill="#e0d820" stroke="#1a1f8a" stroke-width="1.1"/><rect x="277" y="601" width="6" height="6" fill="#9aa6e8" stroke="#1a1f8a" stroke-width="1.1"/><path d="M274 606 h4 M276 604 v5" stroke="#1a1f8a" stroke-width="0.8" fill="none"/>
<rect x="289.5" y="603.5" width="7" height="6.5" fill="#dedbca" stroke="#bdbaa8" stroke-width="1.1"/><rect x="294" y="601" width="6" height="6" fill="#d4d1c0" stroke="#bdbaa8" stroke-width="1.1"/>
<path d="M308 600.500 v10 M312 600.500 v10 M316 600.500 v10 M306 603 h12 M306 606.500 h12" stroke="#d8232a" stroke-width="1.1" fill="none"/><path d="M306 604 v7 h5 z" stroke="#1c2fb4" stroke-width="0.8" fill="#8a9ae0"/>
</svg>
<div class="hdr" style="left:110px;top:617px;width:776px;height:13px"><span style="position:absolute;left:2.500px;top:0">Befehlszeile</span></div>
<svg class="abs" style="left:859px;top:617px" width="27" height="13" viewBox="0 0 27 13"><path d="M4.500 3 h3.500 v4 h-3.500 z M3.500 7.300 h5.500 M6.200 7.500 v3" stroke="#fff" stroke-width="1.1" fill="none"/><path d="M15.500 3.300 l5.500 6 M21 3.300 l-5.500 6" stroke="#fff" stroke-width="1.400" fill="none"/></svg>
<div class="abs" style="left:111px;top:633px;width:19px;height:16px;border:1px solid #fff;border-right-color:#c0bdac;border-bottom-color:#c0bdac;box-sizing:border-box"></div>
<svg class="abs" style="left:116px;top:636px" width="9" height="11" viewBox="0 0 9 11"><path d="M1.500 0.800 v8 l2 -2 l1.500 3 l1.200 -0.600 l-1.500 -2.900 h2.600 z" fill="#f4f2ea" stroke="#b0ad9c" stroke-width="0.800"/></svg>
<svg class="abs" style="left:520px;top:630px" width="366" height="22" viewBox="520 630 366 22">
<rect x="522.5" y="633.5" width="143" height="15" fill="none" stroke="#d8d5c4" stroke-width="0.8"/>
<path d="M528 637 l7 7" stroke="#b0ad9c" stroke-width="1" fill="none"/><circle cx="528.5" cy="637.5" r="1" fill="#b0ad9c"/>
<path d="M543 637 l8 7" stroke="#b0ad9c" stroke-width="1" fill="none"/><circle cx="547" cy="640.5" r="1.1" fill="#777"/>
<circle cx="565" cy="641" r="3" fill="none" stroke="#b0ad9c" stroke-width="1"/><circle cx="566" cy="642" r="0.9" fill="#999"/>
<path d="M577 637 l8 7.500 M585 637 l-8 7.500" stroke="#a8a594" stroke-width="1" fill="none"/>
<rect x="592" y="634" width="1" height="14" fill="#c5c2b2"/>
<path d="M598 645 l5 -6 l5 6" stroke="#a8a594" stroke-width="1" fill="none"/><circle cx="603" cy="639" r="0.9" fill="#777"/>
<path d="M615 645 q1 -6 6 -7" stroke="#a8a594" stroke-width="1" fill="none"/><circle cx="619" cy="639" r="0.9" fill="#777"/>
<path d="M631 637 h8 l-4 7 z" stroke="#b8b5a4" stroke-width="0.9" fill="none"/>
<path d="M644 643 l6 -3" stroke="#b8b5a4" stroke-width="1" fill="none"/><circle cx="650.5" cy="640" r="0.9" fill="#aaa"/>
<rect x="657" y="634" width="1" height="14" fill="#c5c2b2"/>
<rect x="667.5" y="633.5" width="218" height="15" fill="none" stroke="#d8d5c4" stroke-width="0.8"/>
<path d="M669 635 l5 4.500" stroke="#c0202a" stroke-width="1.2" fill="none"/><path d="M672 636 h9 v5 h-5 v3.500 z" stroke="#1a1f8a" stroke-width="0.9" fill="#8a9ae0"/><path d="M674 640 l5 6" stroke="#111" stroke-width="1" fill="none"/>
<rect x="686" y="634" width="1" height="14" fill="#c5c2b2"/>
<path d="M690.500 637 h10 M690.500 640 h10 M690.500 643 h10 M690.500 646 h10" stroke="#111" stroke-width="1.5" fill="none" stroke-dasharray="1.300 1.600"/><path d="M690.500 637 h2" stroke="#c0202a" stroke-width="1.5" fill="none"/>
<path d="M707 645.500 h10" stroke="#1c2fb4" stroke-width="1.3" fill="none"/><path d="M710 645 v-7 M709 638 h6 M714 639 v5" stroke="#223" stroke-width="1" fill="none"/><circle cx="710" cy="638" r="1.2" fill="#d8232a"/>
<path d="M723 646 l10 -9" stroke="#2a8a3a" stroke-width="1.2" fill="none"/><path d="M723 637 l10 9" stroke="#111" stroke-width="1" fill="none"/><circle cx="728" cy="641.5" r="1.3" fill="#d8232a"/>
<rect x="738" y="633.5" width="15.5" height="14.5" fill="#f4f3ea" stroke="#d0cdbc" stroke-width="0.7"/><path d="M741 636 l10 10 M746 636 v4" stroke="#111" stroke-width="1" fill="none"/><circle cx="746" cy="641" r="1.4" fill="#d8232a"/>
<rect x="754.5" y="633.5" width="15.5" height="14.5" fill="#f4f3ea" stroke="#d0cdbc" stroke-width="0.7"/><path d="M757 636 l10 10" stroke="#111" stroke-width="1" fill="none"/><circle cx="763" cy="642" r="1.5" fill="#d8232a"/><circle cx="759.5" cy="638.5" r="0.8" fill="#d8232a"/>
<rect x="771" y="633.5" width="15.5" height="14.5" fill="#f4f3ea" stroke="#d0cdbc" stroke-width="0.7"/><path d="M773.500 636 l10 10 M783.500 637 l-9 9" stroke="#111" stroke-width="1" fill="none"/><circle cx="778.5" cy="641.5" r="1.4" fill="#d8232a"/><circle cx="774" cy="636.5" r="1" fill="#d8232a"/>
<rect x="787.5" y="633.5" width="15.5" height="14.5" fill="#f4f3ea" stroke="#d0cdbc" stroke-width="0.7"/><path d="M790 644 l5 -8 l5 5 z" stroke="#1c2fb4" stroke-width="0.9" fill="none"/><circle cx="795" cy="636.5" r="1.1" fill="#d8232a"/><circle cx="800" cy="641" r="1.1" fill="#d8232a"/><circle cx="790.5" cy="644" r="1.1" fill="#d8232a"/>
<path d="M806 637 h5 q4 1 4 8 M808 645 l7 -8" stroke="#111" stroke-width="1" fill="none"/><circle cx="808" cy="637" r="1" fill="#d8232a"/><circle cx="815" cy="645" r="1.2" fill="#d8232a"/>
<path d="M823 638 l9 -1 v8 h-8 z" stroke="#111" stroke-width="1" fill="none"/><circle cx="823.5" cy="638" r="1.1" fill="#d8232a"/><circle cx="832" cy="645" r="1.1" fill="#d8232a"/><circle cx="824" cy="645" r="1" fill="#d8232a"/>
<path d="M839 645 q8 -1 9 -9 M840 637 l5 6" stroke="#111" stroke-width="1" fill="none"/><circle cx="840" cy="637" r="1" fill="#d8232a"/><circle cx="847.5" cy="636.5" r="1" fill="#d8232a"/>
<path d="M855 645 l2 -3.500 h9 l-2 3.500 z" stroke="#333" stroke-width="0.8" fill="#d9d21c"/><path d="M856 640 h9" stroke="#c0202a" stroke-width="1" fill="none" stroke-dasharray="1 1"/><path d="M855 645.500 h9" stroke="#111" stroke-width="1.2" fill="none"/>
<rect x="872.5" y="637" width="5.5" height="8.5" fill="#e8e08a" stroke="#555" stroke-width="0.8" rx="1.500"/><path d="M873.500 640 h3.500 M873.500 642.500 h3.500" stroke="#777" stroke-width="0.7" fill="none"/><path d="M871 636 l2 1.500" stroke="#c0202a" stroke-width="0.9" fill="none"/>
</svg>
<div class="abs" style="left:116px;top:668px;width:768px;height:14px;background:#fff;border-top:1px solid #333;border-left:1px solid #333;box-sizing:border-box"></div>
<div class="t" style="left:119.500px;top:670px">Befehl &gt;</div>
<div class="abs" style="left:0;top:684px;width:960px;height:1px;background:#dedbca"></div>
<div class="abs" style="left:0px;top:686px;width:98px;height:11px;border-right:1px solid #c0bdac;box-sizing:border-box"></div>
<div class="abs" style="left:98px;top:686px;width:97px;height:11px;border-right:1px solid #c0bdac;box-sizing:border-box"></div>
<div class="abs" style="left:195px;top:686px;width:30px;height:11px;border-right:1px solid #c0bdac;box-sizing:border-box"></div>
<div class="abs" style="left:225px;top:686px;width:53px;height:11px;border-right:1px solid #c0bdac;box-sizing:border-box"></div>
<div class="abs" style="left:278px;top:686px;width:474px;height:11px;border-right:1px solid #c0bdac;box-sizing:border-box"></div>
<div class="abs" style="left:752px;top:686px;width:64px;height:11px;border-right:1px solid #c0bdac;box-sizing:border-box"></div>
<div class="abs" style="left:816px;top:686px;width:70px;height:11px;border-right:1px solid #c0bdac;box-sizing:border-box"></div>
<div class="t" style="left:204px;top:687px">m</div>
<div class="t" style="left:233px;top:687px">Ebene XY</div>
<div class="t" style="left:283px;top:687px">Bereit</div>
<div class="t" style="left:759px;top:687px">Fangmodus</div>
<div class="t" style="left:822.500px;top:687px;color:#b4b1a0">Filter aus</div>
<div class="t" style="left:893px;top:687px">Aktuelles BKS</div>
<div class="abs" style="left:946px;top:688px;width:12px;height:7px;background:#1c2ff0"></div>
<div class="abs" style="left:949px;top:691px;width:1.500px;height:1.500px;background:#9af"></div><div class="abs" style="left:954px;top:691px;width:1.500px;height:1.500px;background:#9af"></div>
<div class="abs" style="left:0;top:698px;width:960px;height:22px;background:linear-gradient(#3a7af0 0,#2a63dd 2px,#245edb 5px,#2258d4 14px,#1d4fc4 20px,#1a44b0 22px)"></div>
<div class="abs" style="left:0;top:698px;width:78px;height:22px;border-radius:0 9px 9px 0;background:linear-gradient(#5eb65a 0,#3f9f3e 3px,#35953a 9px,#2f8a34 16px,#267a2c 22px);box-shadow:inset -2px 0 3px rgba(0,60,0,.45)"></div>
<svg class="abs" style="left:8px;top:701px" width="17" height="16" viewBox="0 0 17 16"><path d="M2 3 q3 -2 6 0 l-1.200 4.500 q-3 -1.800 -6 0 z" fill="#e8552a"/><path d="M9 3.300 q3 1.800 6 0 l-1.200 4.500 q-3 1.800 -6 0 z" fill="#6cc04a"/><path d="M0.600 8.500 q3 -1.800 6 0 l-1.200 4.500 q-3 -1.800 -6 0 z" fill="#3d7fe8"/><path d="M7.600 8.800 q3 1.800 6 0 l-1.200 4.500 q-3 1.800 -6 0 z" fill="#f2c230"/></svg>
<div class="t" style="left:27.500px;top:700px;height:18px;line-height:18px;font-size:13.500px;font-weight:bold;font-style:italic;color:#fff;text-shadow:1px 1px 1px #1a4a1a;letter-spacing:0.300px">Start</div>
<div class="abs" style="left:86px;top:700px;width:119px;height:18px;border-radius:2px;background:linear-gradient(#1c4cb4,#1d51bd 40%,#2259c8);box-shadow:inset 0 0 1px #123a96"></div><div class="t" style="left:109px;top:702.500px;height:14px;line-height:14px;font-size:9.200px;color:#fff">Scia Engineer - [H...</div><svg class="abs" style="left:93px;top:702px" width="14" height="14" viewBox="0 0 14 14"><path d="M1 3 L5 2 L6 6 Z" fill="#35b04a"/><path d="M3 1.500 L8 2 L7 6 Z" fill="#f4c430"/><path d="M6 2 L13 3.500 L9 6 L8 12 L5.500 7 Z" fill="#e5452b"/><path d="M1 3 L4 7 L6 6 Z" fill="#3a78d8"/></svg>
<div class="abs" style="left:207px;top:700px;width:117px;height:18px;border-radius:2px;background:linear-gradient(#5a9af8 0,#3f82f0 3px,#397bea 12px,#3070e0 20px);box-shadow:inset 0 0 1px #123a96"></div><div class="t" style="left:230px;top:702.500px;height:14px;line-height:14px;font-size:9.200px;color:#fff">office wörterbuch ...</div><svg class="abs" style="left:212px;top:702px" width="16" height="14" viewBox="0 0 16 14"><path d="M2 3 l10 8 M4 10 l9 -6" stroke="#f0b820" stroke-width="3"/><path d="M1.500 2.500 l3 0.500 M11 10 l2.500 2" stroke="#fff" stroke-width="1.500"/></svg>
<div class="abs" style="left:327px;top:700px;width:118px;height:18px;border-radius:2px;background:linear-gradient(#5a9af8 0,#3f82f0 3px,#397bea 12px,#3070e0 20px);box-shadow:inset 0 0 1px #123a96"></div><div class="t" style="left:350px;top:702.500px;height:14px;line-height:14px;font-size:9.200px;color:#fff">9. Al Di Meola - Fir...</div><svg class="abs" style="left:332px;top:702px" width="15" height="14" viewBox="0 0 15 14"><path d="M3 11 l8 -9" stroke="#f0a020" stroke-width="3.500"/><path d="M2 12 l2 -2 M10 3 l2.500 -2" stroke="#fff" stroke-width="1.500"/><path d="M5 7 l5 4" stroke="#c04818" stroke-width="1.500"/></svg>
<div class="abs" style="left:447px;top:700px;width:118px;height:18px;border-radius:2px;background:linear-gradient(#5a9af8 0,#3f82f0 3px,#397bea 12px,#3070e0 20px);box-shadow:inset 0 0 1px #123a96"></div><div class="t" style="left:470px;top:702.500px;height:14px;line-height:14px;font-size:9.200px;color:#fff">Screenshot1.JPG -...</div><svg class="abs" style="left:453px;top:702px" width="13" height="14" viewBox="0 0 13 14"><path d="M2.500 5 h8 l-1 8 h-6 z" fill="#7a8a9a" stroke="#345" stroke-width="0.700"/><path d="M3.500 5 l-1 -4 M6 5 l0 -4.500 M8.500 5 l2 -4" stroke="#e0a020" stroke-width="1.600"/><path d="M5 5 l-0.500 -3.500" stroke="#d03020" stroke-width="1.300"/><path d="M7.500 5 l1 -3" stroke="#30a040" stroke-width="1.300"/></svg>
<div class="abs" style="left:567px;top:700px;width:117px;height:18px;border-radius:2px;background:linear-gradient(#5a9af8 0,#3f82f0 3px,#397bea 12px,#3070e0 20px);box-shadow:inset 0 0 1px #123a96"></div><div class="t" style="left:590px;top:702.500px;height:14px;line-height:14px;font-size:9.200px;color:#fff">2011</div><svg class="abs" style="left:572px;top:703px" width="15" height="12" viewBox="0 0 15 12"><path d="M1 2.500 h4.500 l1 1.500 h7 v7 h-12.500 z" fill="#f4d868" stroke="#a8801a" stroke-width="0.800"/><path d="M1 11 l2 -5 h11 l-1.500 5 z" fill="#fbe88a" stroke="#a8801a" stroke-width="0.700"/></svg>
<div class="t" style="left:855px;top:703px;height:13px;line-height:13px;font-size:9px;color:#fff">DE</div>
<div class="abs" style="left:884px;top:698px;width:76px;height:22px;background:linear-gradient(#2ea0f4 0,#189af0 3px,#1290e8 10px,#0f86dc 18px,#0c78c8 22px);border-left:1px solid #0a3f9a;box-shadow:inset 1px 0 0 #5ac0ff;box-sizing:border-box"></div>
<div class="abs" style="left:877px;top:702px;width:14px;height:14px;border-radius:7px;background:radial-gradient(#5aa8ff,#2a70e0);border:1px solid #cfe4ff;box-sizing:border-box"></div>
<svg class="abs" style="left:880px;top:705px" width="8" height="8" viewBox="0 0 8 8"><path d="M5 1 l-3 3 l3 3" stroke="#fff" stroke-width="1.700" fill="none"/></svg>
<div class="abs" style="left:893px;top:703px;width:12px;height:13px;background:#e01818;border:1px solid #fff;box-sizing:border-box"></div>
<svg class="abs" style="left:894px;top:704px" width="10" height="11" viewBox="0 0 10 11"><path d="M1.500 4 h2 l2.500 -2.500 v8 l-2.500 -2.500 h-2 z" fill="#fff"/><path d="M7.500 3 v5" stroke="#fff" stroke-width="1"/></svg>
<div class="abs" style="left:907px;top:702px;width:14px;height:14px;border-radius:7px;background:radial-gradient(circle at 40% 40%,#50e050,#109018 70%,#0a5a10)"></div>
<svg class="abs" style="left:909px;top:704px" width="10" height="10" viewBox="0 0 10 10"><path d="M2 6 q0 -4 5 -4 M8 4 q0 4 -5 4" stroke="#0a3a0a" stroke-width="1.500" fill="none"/></svg>
<div class="t" style="left:926.500px;top:703px;height:13px;line-height:13px;font-size:9px;color:#fff">15:43</div>
</div>
</body></html>
